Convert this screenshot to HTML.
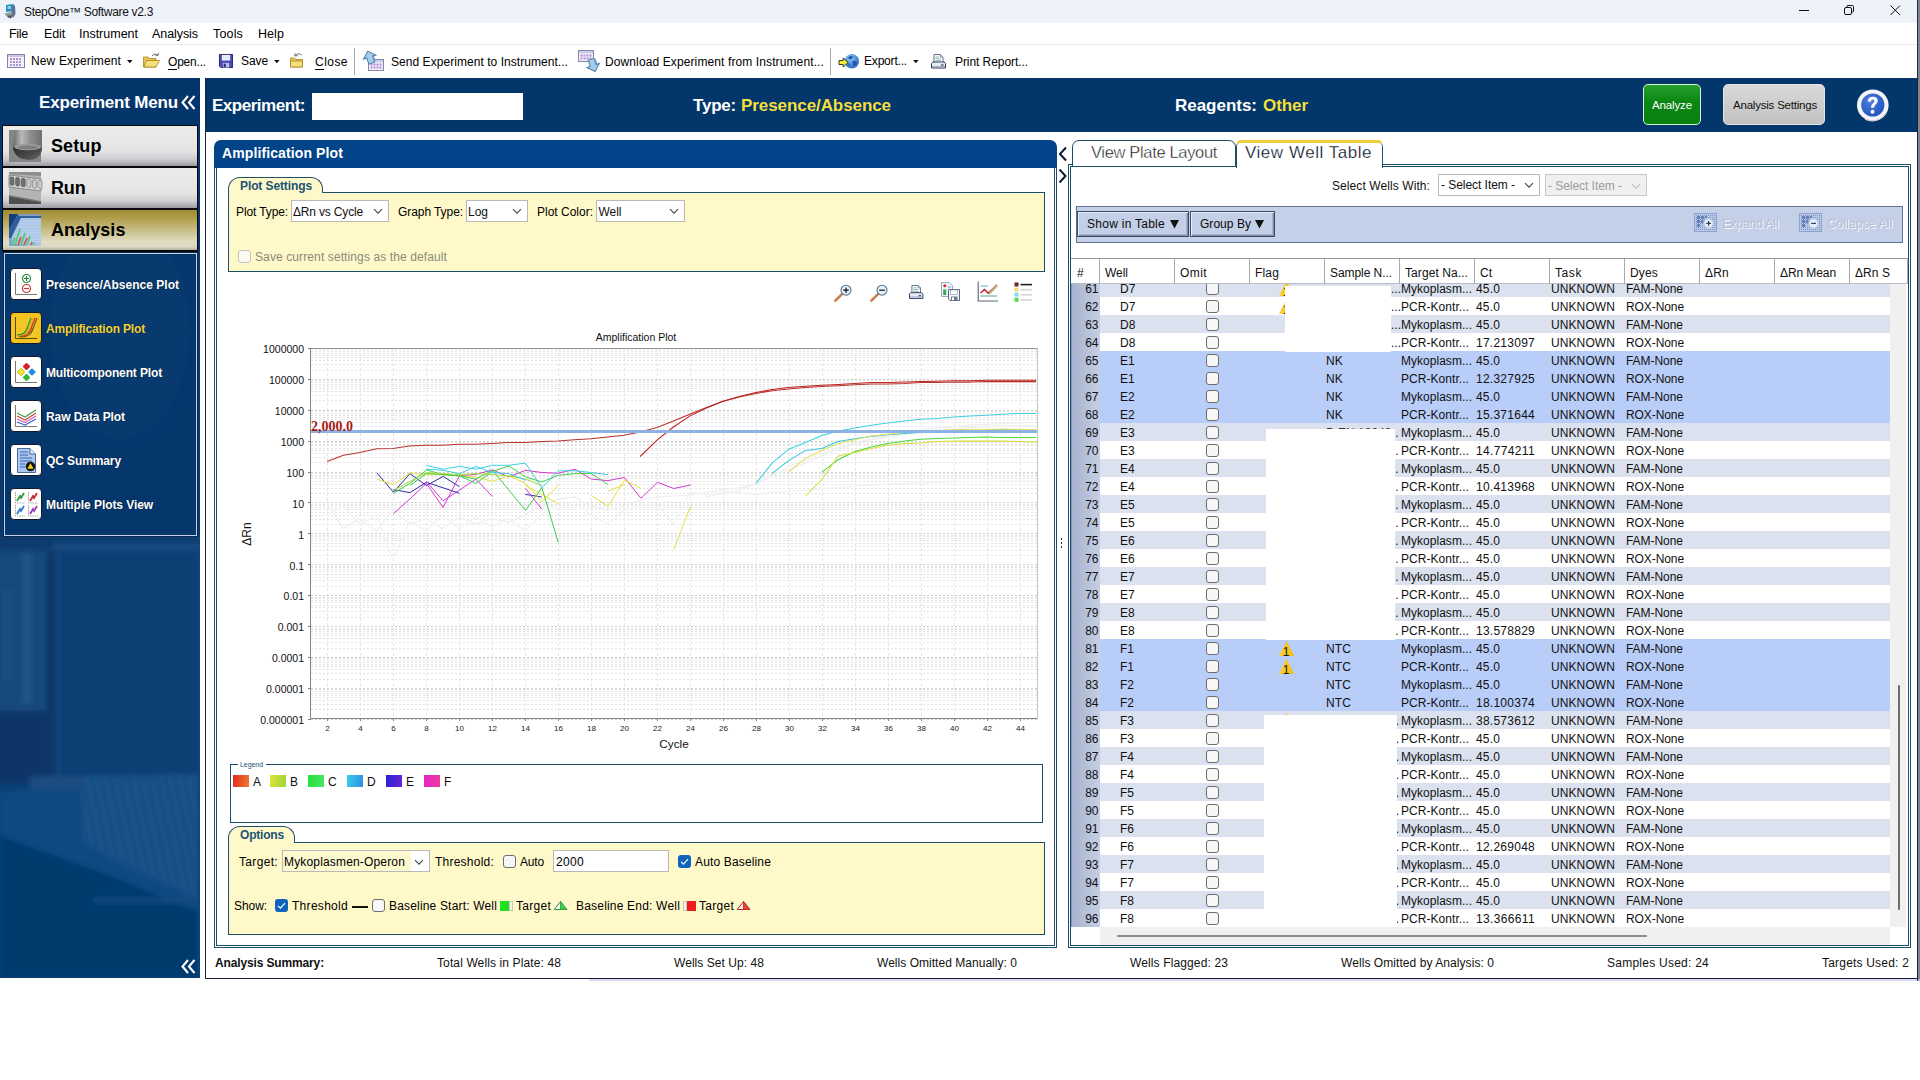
<!DOCTYPE html>
<html><head><meta charset="utf-8"><title>StepOne Software v2.3</title>
<style>
html,body{margin:0;padding:0;}
body{width:1920px;height:1080px;position:relative;overflow:hidden;background:#fff;font-family:"Liberation Sans",sans-serif;font-size:12px;color:#000;}
.t{position:absolute;white-space:nowrap;font-family:"Liberation Sans",sans-serif;}
.abs{position:absolute;}
svg{position:absolute;overflow:visible;}
.cb{position:absolute;width:11px;height:11px;border:1px solid #6d6d6d;border-radius:3px;background:#f7f7f7;}
.sel{position:absolute;background:#fff;border:1px solid #b4b4b4;box-sizing:border-box;}
</style></head><body>

<div style="position:absolute;left:0px;top:0px;width:1920px;height:23px;background:#eef2f9;"></div>
<svg style="left:3px;top:3px" width="15" height="17" viewBox="0 0 15 17">
<defs><filter id="ib"><feGaussianBlur stdDeviation="0.5"/></filter></defs>
<g filter="url(#ib)"><path d="M3 2 L10 1 L12 3 L12 8 L3 9 Z" fill="#2b8fc0"/><rect x="4.5" y="3" width="3.5" height="3" fill="#7fd4ee"/>
<path d="M9 3 L12 3 L12.5 11 L10 15 L8.5 12 Z" fill="#5b6f8c"/>
<path d="M1.5 10.5 L9 9 L10 12 L4 13.5 Z" fill="#8d949b"/><path d="M4 13 L9.5 12 L8 15.5 L5 14.5 Z" fill="#4d5560"/></g></svg>
<div class="t " style="left:24px;top:3.5px;font-size:12px;line-height:16px;font-weight:normal;color:#111;letter-spacing:-0.322px;">StepOne™ Software v2.3</div>
<svg style="left:1790px;top:0" width="120" height="22" viewBox="0 0 120 22" fill="none" stroke="#111" stroke-width="1">
<path d="M9 10.5 H19"/>
<rect x="54.5" y="7.5" width="7" height="7" rx="1.5"/><path d="M57 7 V6.5 Q57 5.5 58 5.5 H62.5 Q63.5 5.5 63.5 6.5 V11 Q63.5 12 62.5 12 H62"/>
<path d="M100.5 5.5 L110 15 M110 5.5 L100.5 15"/>
</svg>
<div style="position:absolute;left:0px;top:23px;width:1920px;height:22px;background:#fff;"></div>
<div class="t " style="left:9px;top:26.0px;font-size:12.5px;line-height:16px;font-weight:normal;color:#000;letter-spacing:-0.289px;">File</div>
<div class="t " style="left:44px;top:26.0px;font-size:12.5px;line-height:16px;font-weight:normal;color:#000;letter-spacing:-0.137px;">Edit</div>
<div class="t " style="left:79px;top:26.0px;font-size:12.5px;line-height:16px;font-weight:normal;color:#000;letter-spacing:-0.006px;">Instrument</div>
<div class="t " style="left:152px;top:26.0px;font-size:12.5px;line-height:16px;font-weight:normal;color:#000;letter-spacing:-0.068px;">Analysis</div>
<div class="t " style="left:213px;top:26.0px;font-size:12.5px;line-height:16px;font-weight:normal;color:#000;letter-spacing:0.163px;">Tools</div>
<div class="t " style="left:258px;top:26.0px;font-size:12.5px;line-height:16px;font-weight:normal;color:#000;letter-spacing:0.070px;">Help</div>
<div style="position:absolute;left:0px;top:44px;width:1917px;height:1px;background:#ebebeb;"></div>
<div style="position:absolute;left:0px;top:45px;width:1920px;height:33px;background:#fff;"></div>
<svg style="left:7px;top:54px" width="18" height="14" viewBox="0 0 18 14">
<rect x="0.5" y="0.5" width="17" height="13" fill="#f4f2fb" stroke="#7d83a8"/>
<g fill="#b48fd6"><rect x="3" y="4" width="2" height="2"/><rect x="6" y="4" width="2" height="2"/><rect x="9" y="4" width="2" height="2"/><rect x="12" y="4" width="2" height="2"/>
<rect x="3" y="7" width="2" height="2"/><rect x="6" y="7" width="2" height="2"/><rect x="9" y="7" width="2" height="2"/><rect x="12" y="7" width="2" height="2"/>
<rect x="3" y="10" width="2" height="2"/><rect x="6" y="10" width="2" height="2"/><rect x="9" y="10" width="2" height="2"/><rect x="12" y="10" width="2" height="2"/></g>
<rect x="1" y="1" width="16" height="2" fill="#c8cbe0"/>
</svg>
<div class="t " style="left:31px;top:53.0px;font-size:12px;line-height:16px;font-weight:normal;color:#000;letter-spacing:0.141px;">New Experiment</div>
<svg style="left:127px;top:60px" width="6" height="4"><path d="M0 0 H5.6 L2.8 3.2 Z" fill="#111"/></svg>
<svg style="left:143px;top:53px" width="18" height="15" viewBox="0 0 18 15">
<path d="M0.5 4 H5 L6.5 5.5 H13 V14 H0.5 Z" fill="#e8c252" stroke="#a88520" stroke-width="0.8"/>
<path d="M0.8 14 L3.5 7.5 H16.5 L13 14 Z" fill="#f6de7d" stroke="#a88520" stroke-width="0.8"/>
<path d="M9 3 Q12 -0.5 15 2.5 M15 2.5 l0.5 -2.6 M15 2.5 l-2.6 0.2" fill="none" stroke="#6a6a6a" stroke-width="1"/>
</svg>
<div class="t " style="left:168px;top:54.0px;font-size:12px;line-height:16px;font-weight:normal;color:#000;letter-spacing:-0.194px;text-decoration:none;">Open...</div>
<div style="position:absolute;left:168px;top:69px;width:9px;height:1px;background:#000;"></div>
<svg style="left:219px;top:54px" width="14" height="14" viewBox="0 0 15 15">
<path d="M0.5 0.5 H14.5 V14.5 H2 L0.5 13 Z" fill="#4747b8" stroke="#23236e" stroke-width="1"/>
<rect x="3" y="1" width="9" height="6" fill="#e9ecfb"/>
<rect x="4" y="9.5" width="7" height="5" fill="#b9bde0"/><rect x="5" y="10.5" width="2.3" height="3.5" fill="#2a2a80"/>
</svg>
<div class="t " style="left:241px;top:53.0px;font-size:12px;line-height:16px;font-weight:normal;color:#000;letter-spacing:-0.090px;">Save</div>
<svg style="left:274px;top:60px" width="6" height="4"><path d="M0 0 H5.6 L2.8 3.2 Z" fill="#111"/></svg>
<svg style="left:289px;top:52px" width="18" height="16" viewBox="0 0 18 16">
<path d="M1.5 6 H5.5 L7 7.5 H13.5 V15 H1.5 Z" fill="#e8c252" stroke="#a88520" stroke-width="0.8"/>
<path d="M1.5 9 H13.5 V15 H1.5 Z" fill="#f6de7d" stroke="#a88520" stroke-width="0.8"/>
<path d="M6 4 Q9 0 12.5 3 M6 4 l0 -2.8 M6 4 l2.6 -0.4" fill="none" stroke="#6a6a6a" stroke-width="1"/>
</svg>
<div class="t " style="left:315px;top:54.0px;font-size:12px;line-height:16px;font-weight:normal;color:#000;letter-spacing:0.463px;">Close</div>
<div style="position:absolute;left:315px;top:69px;width:9px;height:1px;background:#000;"></div>
<div style="position:absolute;left:354px;top:48px;width:1px;height:27px;background:#a9a9a9;"></div>
<svg style="left:362px;top:50px" width="24" height="24" viewBox="0 0 24 24"><g transform="translate(6,9)"><rect x="0.5" y="0.5" width="15" height="11" fill="#f1eefa" stroke="#8186aa"/>
<rect x="1" y="1" width="14" height="2.2" fill="#c9cce2"/>
<g fill="#b48fd6"><rect x="2.5" y="4.5" width="2" height="2"/><rect x="5.5" y="4.5" width="2" height="2"/><rect x="8.5" y="4.5" width="2" height="2"/><rect x="11.5" y="4.5" width="2" height="2"/>
<rect x="2.5" y="7.5" width="2" height="2"/><rect x="5.5" y="7.5" width="2" height="2"/><rect x="8.5" y="7.5" width="2" height="2"/><rect x="11.5" y="7.5" width="2" height="2"/></g></g><g transform="rotate(-18 8 8)"><path d="M8 0.8 L14.5 7 H11 V13.5 H5 V7 H1.5 Z" fill="#a6cdea" stroke="#4b7fa8" stroke-width="1"/><path d="M11 7 V13.5 L12.5 12 V7Z" fill="#6e9cc2"/></g></svg>
<div class="t " style="left:391px;top:54.0px;font-size:12px;line-height:16px;font-weight:normal;color:#000;letter-spacing:0.049px;">Send Experiment to Instrument...</div>
<svg style="left:578px;top:50px" width="24" height="24" viewBox="0 0 24 24"><g transform="translate(0,0)"><rect x="0.5" y="0.5" width="15" height="11" fill="#f1eefa" stroke="#8186aa"/>
<rect x="1" y="1" width="14" height="2.2" fill="#c9cce2"/>
<g fill="#b48fd6"><rect x="2.5" y="4.5" width="2" height="2"/><rect x="5.5" y="4.5" width="2" height="2"/><rect x="8.5" y="4.5" width="2" height="2"/><rect x="11.5" y="4.5" width="2" height="2"/>
<rect x="2.5" y="7.5" width="2" height="2"/><rect x="5.5" y="7.5" width="2" height="2"/><rect x="8.5" y="7.5" width="2" height="2"/><rect x="11.5" y="7.5" width="2" height="2"/></g></g><g transform="translate(7,7) rotate(-18 8 8)"><path d="M8 14.8 L14.5 8.5 H11 V2 H5 V8.5 H1.5 Z" fill="#a6cdea" stroke="#4b7fa8" stroke-width="1"/><path d="M11 2 V8.5 L12.5 8.5 V3.5Z" fill="#6e9cc2"/></g></svg>
<div class="t " style="left:605px;top:54.0px;font-size:12px;line-height:16px;font-weight:normal;color:#000;letter-spacing:0.111px;">Download Experiment from Instrument...</div>
<div style="position:absolute;left:830px;top:48px;width:1px;height:27px;background:#a9a9a9;"></div>
<svg style="left:838px;top:53px" width="22" height="17" viewBox="0 0 22 17">
<defs><radialGradient id="gg" cx="0.4" cy="0.3" r="0.8"><stop offset="0" stop-color="#9fd0f8"/><stop offset="0.5" stop-color="#4a90e0"/><stop offset="1" stop-color="#2a62b8"/></radialGradient></defs>
<circle cx="13.8" cy="8.3" r="7.2" fill="url(#gg)"/>
<path d="M10 4.5 Q12.5 2 15 3.4 Q14.5 5.8 12.5 6.5 Q10.6 6.6 10 4.5 Z M14 8 Q17.5 7 19.5 9.5 Q18 13 15 12.5 Q15.5 10 14 8 Z M9.5 10 Q11.5 10.5 12 13 Q10.5 13.5 9.5 10Z" fill="#1f57a8"/>
<path d="M1 7.5 H5.2 V5 L10.2 9.5 L5.2 14 V11.5 H1 Z" fill="#eef03a" stroke="#222" stroke-width="0.9" stroke-linejoin="round"/>
</svg>
<div class="t " style="left:864px;top:53.0px;font-size:12px;line-height:16px;font-weight:normal;color:#000;letter-spacing:-0.188px;">Export...</div>
<svg style="left:912.5px;top:60px" width="6" height="4"><path d="M0 0 H5.6 L2.8 3.2 Z" fill="#111"/></svg>
<svg style="left:930.5px;top:53.5px" width="15.0" height="15.0" viewBox="0 0 15 15">
<path d="M3 0.5 H9.5 L12 3 V8.5 H3 Z" fill="#fbfdfd" stroke="#55657f" stroke-width="0.9"/>
<path d="M9.5 0.5 V3 H12" fill="#dfe6ee" stroke="#55657f" stroke-width="0.7"/>
<path d="M4.5 3 H8 M4.5 4.8 H10 M4.5 6.6 H10" stroke="#7fb2b4" stroke-width="0.9"/>
<path d="M1.8 8 H13.2 L14.5 9.5 V14 H0.5 V9.5 Z" fill="#e9edf5" stroke="#2c3b5c" stroke-width="1"/>
<path d="M1 12.4 H14" stroke="#8d9ab4" stroke-width="0.8"/>
<rect x="10" y="10.3" width="2.6" height="1.5" fill="#56637e"/>
</svg>
<div class="t " style="left:955px;top:54.0px;font-size:12px;line-height:16px;font-weight:normal;color:#000;letter-spacing:-0.069px;">Print Report...</div>
<div style="position:absolute;left:1917px;top:0px;width:1px;height:981px;background:#262c3c;"></div>
<div style="position:absolute;left:1918px;top:0px;width:2px;height:979px;background:#7d8493;"></div>
<div style="position:absolute;left:1918px;top:979px;width:2px;height:2px;background:#b8b4d8;"></div>
<div style="position:absolute;left:205px;top:78px;width:1713px;height:901px;background:#fff;border:1px solid #1a2238;box-sizing:border-box;"></div>
<div style="position:absolute;left:206px;top:78px;width:1711px;height:54px;background:#03376b;"></div>
<div class="t " style="left:212px;top:95.0px;font-size:17px;line-height:22px;font-weight:bold;color:#fff;letter-spacing:-0.477px;">Experiment:</div>
<div style="position:absolute;left:312px;top:93px;width:211px;height:27px;background:#fff;"></div>
<div class="t " style="left:693px;top:95.0px;font-size:17px;line-height:22px;font-weight:bold;color:#fff;letter-spacing:-0.216px;">Type:</div>
<div class="t " style="left:741px;top:95.0px;font-size:17px;line-height:22px;font-weight:bold;color:#f4de3c;letter-spacing:-0.075px;">Presence/Absence</div>
<div class="t " style="left:1175px;top:95.0px;font-size:17px;line-height:22px;font-weight:bold;color:#fff;letter-spacing:-0.021px;">Reagents:</div>
<div class="t " style="left:1263px;top:95.0px;font-size:17px;line-height:22px;font-weight:bold;color:#f4de3c;letter-spacing:-0.069px;">Other</div>
<div class="abs" style="left:1643px;top:84px;width:58px;height:41px;box-sizing:border-box;border:1.5px solid #d9f3d5;border-radius:5px;background:linear-gradient(#25a02b 0%,#0b8512 45%,#0a7f10 100%);"></div>
<div class="t " style="left:1652px;top:97.5px;font-size:11.5px;line-height:15px;font-weight:normal;color:#fff;letter-spacing:-0.132px;">Analyze</div>
<div class="abs" style="left:1723px;top:84px;width:102px;height:41px;box-sizing:border-box;border:1.5px solid #e4e4e4;border-radius:5px;background:linear-gradient(#d9d9d9 0%,#cbcbcb 60%,#c2c2c2 100%);"></div>
<div class="t " style="left:1733px;top:97.5px;font-size:11.5px;line-height:15px;font-weight:normal;color:#111;letter-spacing:-0.210px;">Analysis Settings</div>
<svg style="left:1855px;top:87px" width="36" height="36" viewBox="0 0 36 36">
<defs><radialGradient id="hg" cx="0.4" cy="0.35" r="0.8"><stop offset="0" stop-color="#4f80de"/><stop offset="0.6" stop-color="#2f60c8"/><stop offset="1" stop-color="#2450b0"/></radialGradient></defs>
<circle cx="17.8" cy="18.2" r="15.8" fill="#f3f5fb"/>
<path d="M31 26 A15.8 15.8 0 0 1 10 32" fill="none" stroke="#c9ccd4" stroke-width="1.2"/>
<circle cx="17.8" cy="18" r="11.6" fill="url(#hg)"/>
<g transform="translate(17.8 18) scale(0.94) translate(-18 -17.4)">
<path d="M12.6 13.6 Q12.8 8.6 18 8.6 Q23.2 8.6 23.2 13 Q23.2 15.6 20.6 17.4 Q19.3 18.4 19.3 20.4 L16 20.4 Q16 17.6 17.8 16 Q19.8 14.4 19.8 13.2 Q19.8 11.6 18 11.6 Q16.2 11.6 16 13.9 Z" fill="#fff"/>
<circle cx="17.7" cy="24.6" r="2.1" fill="#fff"/></g>
</svg>
<div class="t " style="left:215px;top:955.0px;font-size:12px;line-height:16px;font-weight:bold;color:#111;letter-spacing:-0.141px;">Analysis Summary:</div>
<div class="t " style="left:437px;top:955.0px;font-size:12px;line-height:16px;font-weight:normal;color:#111;letter-spacing:0.118px;">Total Wells in Plate: 48</div>
<div class="t " style="left:674px;top:955.0px;font-size:12px;line-height:16px;font-weight:normal;color:#111;letter-spacing:0.053px;">Wells Set Up: 48</div>
<div class="t " style="left:877px;top:955.0px;font-size:12px;line-height:16px;font-weight:normal;color:#111;letter-spacing:0.033px;">Wells Omitted Manually: 0</div>
<div class="t " style="left:1130px;top:955.0px;font-size:12px;line-height:16px;font-weight:normal;color:#111;letter-spacing:0.127px;">Wells Flagged: 23</div>
<div class="t " style="left:1341px;top:955.0px;font-size:12px;line-height:16px;font-weight:normal;color:#111;letter-spacing:0.065px;">Wells Omitted by Analysis: 0</div>
<div class="t " style="left:1607px;top:955.0px;font-size:12px;line-height:16px;font-weight:normal;color:#111;letter-spacing:0.246px;">Samples Used: 24</div>
<div class="t " style="left:1822px;top:955.0px;font-size:12px;line-height:16px;font-weight:normal;color:#111;letter-spacing:0.197px;">Targets Used: 2</div>
<div style="position:absolute;left:589px;top:979px;width:1328px;height:2px;background:#dcd8f6;"></div>
<div class="abs" style="left:0;top:78px;width:200px;height:900px;overflow:hidden;background:#05366b;">
<svg style="left:0;top:0" width="200" height="900" viewBox="0 78 200 900">
<defs><filter id="bl" x="-20%" y="-20%" width="140%" height="140%"><feGaussianBlur stdDeviation="2.5"/></filter>
<filter id="bl2" x="-20%" y="-20%" width="140%" height="140%"><feGaussianBlur stdDeviation="6"/></filter>
<pattern id="plt" width="9" height="7" patternUnits="userSpaceOnUse" patternTransform="rotate(-12)"><rect width="9" height="7" fill="#184d84"/><ellipse cx="4.5" cy="3.5" rx="3.2" ry="2" fill="#1f568e"/></pattern></defs>
<rect x="0" y="78" width="200" height="900" fill="#05366b"/>
<rect x="0" y="250" width="200" height="300" fill="#08396f"/>
<g filter="url(#bl2)"><ellipse cx="120" cy="330" rx="70" ry="110" fill="#0d4179" opacity="0.7"/></g>
<rect x="0" y="536" width="200" height="442" fill="#0d3f74"/>
<g filter="url(#bl)">
<rect x="-5" y="536" width="210" height="12" fill="#0a3a6e"/>
<rect x="52" y="543" width="150" height="8" fill="#124a80"/>
<rect x="-5" y="551" width="52" height="160" fill="#18487c"/>
<rect x="22" y="553" width="10" height="150" fill="#215389"/>
<rect x="2" y="590" width="12" height="90" fill="#1c4d82"/>
<rect x="-5" y="711" width="52" height="72" fill="#073568"/>
<rect x="46" y="551" width="10" height="232" fill="#0a3769"/>
<rect x="56" y="553" width="2.5" height="225" fill="#1b4d83"/>
<polygon points="0,792 80,785 200,880 200,912 100,872 0,836" fill="#0f4a82"/>
<polygon points="82,776 200,774 200,900 118,862 82,842" fill="url(#plt)"/>
<polygon points="0,836 100,872 200,912 200,978 0,978" fill="#063a6e"/>
<rect x="30" y="776" width="52" height="14" fill="#1a4c82"/>
<rect x="95" y="898" width="105" height="5" fill="#14497f"/>
</g>
<rect x="197" y="536" width="3" height="442" fill="#0d477e" opacity="0.6"/>
</svg></div>
<div class="t " style="left:39px;top:92.0px;font-size:17px;line-height:22px;font-weight:bold;color:#fff;letter-spacing:-0.180px;">Experiment Menu</div>
<svg style="left:181px;top:95px" width="15" height="15" viewBox="0 0 15 15" fill="none" stroke="#fff" stroke-width="2.1"><path d="M7 1 L1.5 7.5 L7 14 M13.5 1 L8 7.5 L13.5 14"/></svg>
<svg style="left:181px;top:959px" width="15" height="15" viewBox="0 0 15 15" fill="none" stroke="#fff" stroke-width="2.1"><path d="M7 1 L1.5 7.5 L7 14 M13.5 1 L8 7.5 L13.5 14"/></svg>
<div class="abs" style="left:2px;top:125px;width:196px;height:43px;box-sizing:border-box;border:1px solid #0a0a0a;border-bottom-width:2px;background:linear-gradient(180deg,#ececec 0%,#e7e7e7 40%,#e4e4e4 62%,#cfcfd3 82%,#a7a7ae 96%,#9a9aa2 100%);"></div>
<div class="t " style="left:51px;top:134.7px;font-size:18px;line-height:23px;font-weight:bold;color:#000;letter-spacing:0.097px;">Setup</div>
<div class="abs" style="left:2px;top:167px;width:196px;height:43px;box-sizing:border-box;border:1px solid #0a0a0a;border-bottom-width:2px;background:linear-gradient(180deg,#ececec 0%,#e7e7e7 40%,#e4e4e4 62%,#cfcfd3 82%,#a7a7ae 96%,#9a9aa2 100%);"></div>
<div class="t " style="left:51px;top:176.7px;font-size:18px;line-height:23px;font-weight:bold;color:#000;letter-spacing:-0.167px;">Run</div>
<div class="abs" style="left:2px;top:209px;width:196px;height:43px;box-sizing:border-box;border:1px solid #0a0a0a;border-bottom-width:2px;background:linear-gradient(180deg,#9f8c34 0%,#ad9b47 18%,#c8bd84 50%,#e0dbc0 78%,#dcd8c6 92%,#b4b09e 100%);"></div>
<div class="t " style="left:51px;top:218.7px;font-size:18px;line-height:23px;font-weight:bold;color:#000;letter-spacing:0.057px;">Analysis</div>
<svg style="left:9px;top:130px" width="32" height="32" viewBox="0 0 32 32">
<defs><linearGradient id="tb" x1="0" x2="1"><stop offset="0" stop-color="#6a6a6a"/><stop offset="0.3" stop-color="#b9b9b9"/><stop offset="0.6" stop-color="#8f8f8f"/><stop offset="1" stop-color="#6f6f6f"/></linearGradient>
<linearGradient id="tb2" x1="0" x2="1" y1="0" y2="1"><stop offset="0" stop-color="#2c2c2c"/><stop offset="0.6" stop-color="#4a4a4a"/><stop offset="1" stop-color="#6a6a6a"/></linearGradient></defs>
<rect width="32" height="32" fill="#858585"/>
<path d="M6 0 H33 V18 Q32 30 19 30 Q5 29 4 17 Z" fill="url(#tb)"/>
<path d="M4 17 Q18 23 33 18 Q32 30 19 30 Q5 29 4 17 Z" fill="url(#tb2)"/>
<ellipse cx="18.5" cy="17" rx="13" ry="3.2" fill="#9c9c9c"/>
<ellipse cx="19" cy="17.4" rx="10" ry="2" fill="#7e7e7e"/>
</svg>
<svg style="left:9px;top:172px" width="32" height="32" viewBox="0 0 32 32">
<rect width="32" height="32" fill="#b4b4b4"/>
<path d="M0 0 H32 V4 L0 2 Z" fill="#8e8e8e"/>
<path d="M0 3 L32 7 V19 L0 15 Z" fill="#d6d6d6" stroke="#6e6e6e" stroke-width="0.7"/>
<g stroke="#555" stroke-width="0.6" transform="skewY(7)"><g fill="#6f6f6f"><rect x="1" y="4.5" width="4" height="8.5" rx="1.6"/><rect x="6.6" y="4.5" width="4" height="8.5" rx="1.6"/><rect x="12.2" y="4.5" width="4" height="8.5" rx="1.6"/></g>
<g fill="#c9c9c9" stroke="#777"><rect x="17.8" y="4.5" width="4" height="8.5" rx="1.6"/><rect x="23.4" y="4.5" width="4" height="8.5" rx="1.6"/><rect x="29" y="4.5" width="4" height="8.5" rx="1.6"/></g></g>
<path d="M0 24 L32 30 V32 H0 Z" fill="#4e4e4e"/><path d="M0 23 L32 29 V30.5 L0 24.5Z" fill="#777"/>
</svg>
<svg style="left:9px;top:214px" width="32" height="32" viewBox="0 0 32 32">
<rect width="32" height="32" fill="#7fa6cf"/>
<path d="M0 0 H9 L0 16 Z" fill="#163f78"/><path d="M9 0 H32 V4 L12 4 L2 24 L0 24 V16 Z" fill="#2f5e98"/>
<path d="M9 0 H32 V2 H10 Z" fill="#8a9db8"/>
<path d="M12 4 H32 V32 H20 L3 30 L3 23 Z" fill="#a9c6e6"/>
<g stroke="#c6d9ef" stroke-width="0.8"><path d="M11 7 H32 M10 10 H32 M9 13 H32 M8 16 H32 M7 19 H32 M6 22 H32 M5 25 H32 M4 28 H32"/></g>
<g stroke-width="1.8"><path d="M3 31 L6 24" stroke="#59c47a"/><path d="M6 31 L11 15" stroke="#59c47a"/><path d="M9 31 L12 23" stroke="#c85a4a"/><path d="M12 31 L16 19" stroke="#59c47a"/><path d="M15 31 L18 24" stroke="#c85a4a"/><path d="M18 31 L21 22" stroke="#59c47a"/><path d="M22 31 L23 28" stroke="#c85a4a"/><path d="M24.5 31 L25.5 28.5" stroke="#59c47a"/></g>
</svg>
<div class="abs" style="left:3px;top:252px;width:195px;height:285px;box-sizing:border-box;border:1px solid #0b2a52;"></div>
<div class="abs" style="left:4px;top:253px;width:193px;height:283px;box-sizing:border-box;border:1px solid #c3d2ea;background:rgba(4,52,106,0.55);"></div>
<div class="abs" style="left:10px;top:268px;width:32px;height:32px;box-sizing:border-box;border:1px solid #111a2a;border-radius:4px;background:#fff;"></div>
<div class="t " style="left:46px;top:277.0px;font-size:12px;line-height:16px;font-weight:bold;color:#fff;letter-spacing:0.013px;text-shadow:0 0 1px rgba(0,0,0,0.6);">Presence/Absence Plot</div>
<div class="abs" style="left:10px;top:312px;width:32px;height:32px;box-sizing:border-box;border:1px solid #111a2a;border-radius:4px;background:#f2c321;"></div>
<div class="t " style="left:46px;top:321.0px;font-size:12px;line-height:16px;font-weight:bold;color:#f2d338;letter-spacing:-0.167px;text-shadow:0 0 1px rgba(0,0,0,0.6);">Amplification Plot</div>
<div class="abs" style="left:10px;top:356px;width:32px;height:32px;box-sizing:border-box;border:1px solid #111a2a;border-radius:4px;background:#fff;"></div>
<div class="t " style="left:46px;top:365.0px;font-size:12px;line-height:16px;font-weight:bold;color:#fff;letter-spacing:-0.140px;text-shadow:0 0 1px rgba(0,0,0,0.6);">Multicomponent Plot</div>
<div class="abs" style="left:10px;top:400px;width:32px;height:32px;box-sizing:border-box;border:1px solid #111a2a;border-radius:4px;background:#fff;"></div>
<div class="t " style="left:46px;top:409.0px;font-size:12px;line-height:16px;font-weight:bold;color:#fff;letter-spacing:-0.078px;text-shadow:0 0 1px rgba(0,0,0,0.6);">Raw Data Plot</div>
<div class="abs" style="left:10px;top:444px;width:32px;height:32px;box-sizing:border-box;border:1px solid #111a2a;border-radius:4px;background:#fff;"></div>
<div class="t " style="left:46px;top:453.0px;font-size:12px;line-height:16px;font-weight:bold;color:#fff;letter-spacing:-0.103px;text-shadow:0 0 1px rgba(0,0,0,0.6);">QC Summary</div>
<div class="abs" style="left:10px;top:488px;width:32px;height:32px;box-sizing:border-box;border:1px solid #111a2a;border-radius:4px;background:#fff;"></div>
<div class="t " style="left:46px;top:497.0px;font-size:12px;line-height:16px;font-weight:bold;color:#fff;letter-spacing:-0.077px;text-shadow:0 0 1px rgba(0,0,0,0.6);">Multiple Plots View</div>
<svg style="left:11px;top:269px" width="30" height="30" viewBox="0 0 30 30" fill="none">
<path d="M4.5 4 V25.5 H26" stroke="#777" stroke-width="1"/>
<circle cx="15.5" cy="9.5" r="4" stroke="#1f8a3c" stroke-width="1.2"/><path d="M13 9.5 H18 M15.5 7 V12" stroke="#1f8a3c" stroke-width="1.2"/>
<circle cx="15.5" cy="19.5" r="4" stroke="#c8323a" stroke-width="1.2"/><path d="M13 19.5 H18" stroke="#c8323a" stroke-width="1.2"/>
</svg>
<svg style="left:11px;top:313px" width="30" height="30" viewBox="0 0 30 30" fill="none">
<path d="M4.5 4 V25.5 H26" stroke="#5a4a10" stroke-width="1"/>
<g stroke="#f8e27a" stroke-width="0.6" stroke-dasharray="1 1.5"><path d="M6 8 H26 M6 11 H26 M6 14 H26 M6 17 H26 M6 20 H26 M6 23 H26"/></g>
<path d="M6 22 C12 22 15 20 17 13 L20 5" stroke="#2e9a3a" stroke-width="1.3"/>
<path d="M7 23 C14 23 17 20 19 13 L22 5" stroke="#e8b000" stroke-width="1.3"/>
<path d="M8 23.5 C16 23.5 19 20 21 13 L24 5" stroke="#d13a2a" stroke-width="1.3"/>
<path d="M10 24 C18 24 21 20 23 13 L26 5" stroke="#6a5a20" stroke-width="1.2"/>
</svg>
<svg style="left:11px;top:357px" width="30" height="30" viewBox="0 0 30 30" fill="none">
<path d="M4.5 4 V25.5 H26" stroke="#777" stroke-width="1"/>
<rect x="12.7" y="6.7" width="5.6" height="5.6" rx="1" transform="rotate(45 15.5 9.5)" fill="#d62027"/>
<rect x="7.2" y="12.2" width="5.6" height="5.6" rx="1" transform="rotate(45 10 15)" fill="#f2e23a" stroke="#b8a800" stroke-width="0.6"/>
<rect x="18.2" y="12.2" width="5.6" height="5.6" rx="1" transform="rotate(45 21 15)" fill="#2a8ee0"/>
<rect x="12.7" y="17.7" width="5.6" height="5.6" rx="1" transform="rotate(45 15.5 20.5)" fill="#2fba3a"/>
</svg>
<svg style="left:11px;top:401px" width="30" height="30" viewBox="0 0 30 30" fill="none">
<path d="M4.5 4 V25.5 H26" stroke="#777" stroke-width="1"/>
<path d="M6 12 L14 16 L25 9" stroke="#3ca04a" stroke-width="1.2"/>
<path d="M6 15 L14 19 L25 12" stroke="#d1423a" stroke-width="1.2"/>
<path d="M6 18 L14 21.5 L25 15" stroke="#c06ac0" stroke-width="1.2"/>
<path d="M6 21 L14 24 L25 18" stroke="#3a66c8" stroke-width="1.2"/>
</svg>
<svg style="left:11px;top:445px" width="30" height="30" viewBox="0 0 30 30" fill="none">
<path d="M6.5 3.5 H19 L24.5 9 V27.5 H6.5 Z" fill="#a9c9f2" stroke="#4a6a9a" stroke-width="1"/>
<path d="M19 3.5 V9 H24.5" fill="#e6f0fc" stroke="#4a6a9a" stroke-width="1"/>
<path d="M9 7 H17 M9 10 H17 M9 13 H21 M9 16 H21 M9 19 H14 M9 22 H14" stroke="#3f66a8" stroke-width="1.2"/>
<circle cx="19.5" cy="21.5" r="4.8" fill="#151515"/>
<path d="M19.5 18.2 L22.6 23.8 H16.4 Z" fill="#f2d21f"/>
</svg>
<svg style="left:11px;top:489px" width="30" height="30" viewBox="0 0 30 30" fill="none">
<g stroke="#888" stroke-width="0.8" stroke-dasharray="1.5 1"><path d="M4.5 3 V14 H14 M17.5 3 V14 H27 M4.5 16 V27 H14 M17.5 16 V27 H27"/></g>
<path d="M6 12 L9 7 L10 9 L13 4" stroke="#2f9a3e" stroke-width="1.8"/>
<path d="M19 12 L22 7 L23 9 L26 4" stroke="#c8282e" stroke-width="1.8"/>
<path d="M6 25 L9 20 L10 22 L13 17" stroke="#2a7ad0" stroke-width="1.8"/>
<path d="M19 25 L22 20 L23 22 L26 17" stroke="#9a3ab8" stroke-width="1.8"/>
</svg>
<div class="abs" style="left:214px;top:140px;width:843px;height:28px;background:#01448a;border-radius:7px 7px 0 0;"></div>
<div class="t " style="left:222px;top:144.0px;font-size:14px;line-height:18px;font-weight:bold;color:#fff;letter-spacing:0.111px;">Amplification Plot</div>
<div class="abs" style="left:214px;top:167px;width:843px;height:781px;box-sizing:border-box;border:1px solid #1d4f6b;border-top:none;"></div>
<div class="abs" style="left:216px;top:167px;width:839px;height:779px;box-sizing:border-box;border:1px solid #1d4f6b;border-top:none;"></div>
<div class="abs" style="left:228px;top:177px;width:95px;height:17px;box-sizing:border-box;border:1px solid #1d4f6b;border-bottom:none;border-radius:12px 12px 0 0;background:#fff9c9;"></div>
<div class="abs" style="left:228px;top:192px;width:817px;height:80px;box-sizing:border-box;border:1px solid #1d4f6b;background:#fff9c9;"></div>
<div class="abs" style="left:229px;top:192px;width:93px;height:2px;background:#fff9c9;"></div>
<div class="t " style="left:240px;top:177.5px;font-size:12px;line-height:16px;font-weight:bold;color:#1b5474;letter-spacing:-0.103px;">Plot Settings</div>
<div class="t " style="left:236px;top:203.5px;font-size:12px;line-height:16px;font-weight:normal;color:#000;letter-spacing:-0.116px;">Plot Type:</div>
<div class="abs" style="left:291px;top:200px;width:98px;height:22px;box-sizing:border-box;border:1px solid #b9b9b9;background:#fff;"></div>
<div class="t " style="left:293px;top:203.8px;font-size:12px;line-height:16px;font-weight:normal;color:#111;letter-spacing:-0.169px;">ΔRn vs Cycle</div>
<svg style="left:373px;top:208.0px" width="10" height="7" viewBox="0 0 10 7" fill="none" stroke="#444" stroke-width="1.1"><path d="M1 1.2 L5 5.2 L9 1.2"/></svg>
<div class="t " style="left:398px;top:203.5px;font-size:12px;line-height:16px;font-weight:normal;color:#000;letter-spacing:-0.075px;">Graph Type:</div>
<div class="abs" style="left:466px;top:200px;width:62px;height:22px;box-sizing:border-box;border:1px solid #b9b9b9;background:#fff;"></div>
<div class="t " style="left:468px;top:203.8px;font-size:12px;line-height:16px;font-weight:normal;color:#111;letter-spacing:-0.010px;">Log</div>
<svg style="left:512px;top:208.0px" width="10" height="7" viewBox="0 0 10 7" fill="none" stroke="#444" stroke-width="1.1"><path d="M1 1.2 L5 5.2 L9 1.2"/></svg>
<div class="t " style="left:537px;top:203.5px;font-size:12px;line-height:16px;font-weight:normal;color:#000;letter-spacing:-0.003px;">Plot Color:</div>
<div class="abs" style="left:596px;top:200px;width:89px;height:22px;box-sizing:border-box;border:1px solid #b9b9b9;background:#fff;"></div>
<div class="t " style="left:598.5px;top:203.8px;font-size:12px;line-height:16px;font-weight:normal;color:#111;letter-spacing:-0.031px;">Well</div>
<svg style="left:669px;top:208.0px" width="10" height="7" viewBox="0 0 10 7" fill="none" stroke="#444" stroke-width="1.1"><path d="M1 1.2 L5 5.2 L9 1.2"/></svg>
<div class="cb" style="left:238px;top:250px;border-color:#c4c4c0;background:#fbfaf0;"></div>
<div class="t " style="left:255px;top:249.0px;font-size:12px;line-height:16px;font-weight:normal;color:#8a8a7c;letter-spacing:0.108px;">Save current settings as the default</div>
<svg style="left:834px;top:283.5px" width="19" height="18" viewBox="0 0 19 18" fill="none">
<path d="M1.2 16.6 L8.4 9.6" stroke="#d08a5a" stroke-width="2.6" stroke-linecap="round"/>
<path d="M1.6 17 L8.6 10.2" stroke="#a8602a" stroke-width="0.8"/>
<circle cx="12" cy="6.2" r="5" fill="#e3f1fb" stroke="#55708c" stroke-width="1.1"/><path d="M9.2 6.2 H14.8 M12 3.4 V9" stroke="#111" stroke-width="1.2"/></svg>
<svg style="left:870px;top:283.5px" width="19" height="18" viewBox="0 0 19 18" fill="none">
<path d="M1.2 16.6 L8.4 9.6" stroke="#d08a5a" stroke-width="2.6" stroke-linecap="round"/>
<path d="M1.6 17 L8.6 10.2" stroke="#a8602a" stroke-width="0.8"/>
<circle cx="12" cy="6.2" r="5" fill="#e3f1fb" stroke="#55708c" stroke-width="1.1"/><path d="M9.2 6.2 H14.8" stroke="#111" stroke-width="1.2"/></svg>
<svg style="left:908.8px;top:284.8px" width="14.399999999999999" height="14.399999999999999" viewBox="0 0 15 15">
<path d="M3 0.5 H9.5 L12 3 V8.5 H3 Z" fill="#fbfdfd" stroke="#55657f" stroke-width="0.9"/>
<path d="M9.5 0.5 V3 H12" fill="#dfe6ee" stroke="#55657f" stroke-width="0.7"/>
<path d="M4.5 3 H8 M4.5 4.8 H10 M4.5 6.6 H10" stroke="#7fb2b4" stroke-width="0.9"/>
<path d="M1.8 8 H13.2 L14.5 9.5 V14 H0.5 V9.5 Z" fill="#e9edf5" stroke="#2c3b5c" stroke-width="1"/>
<path d="M1 12.4 H14" stroke="#8d9ab4" stroke-width="0.8"/>
<rect x="10" y="10.3" width="2.6" height="1.5" fill="#56637e"/>
</svg>
<svg style="left:941px;top:282px" width="21" height="20" viewBox="0 0 21 20" fill="none">
<path d="M0.5 0.5 H8.5 L11.5 3.5 V14.5 H0.5 Z" fill="#eef2f8" stroke="#8a96ae" stroke-width="0.8"/>
<circle cx="3.8" cy="3.8" r="1.5" fill="#d22a3a"/><rect x="2.2" y="7.5" width="3" height="5.5" fill="#36a85a"/><path d="M7 5 H10 M7 8 H10" stroke="#5a8ac0" stroke-width="0.8"/>
<path d="M7.5 7.5 H18.5 V18.5 H9 L7.5 17 Z" fill="#f4f6fa" stroke="#5a6a84" stroke-width="1"/>
<rect x="9.5" y="8" width="7" height="4.5" fill="#fff" stroke="#8a96ae" stroke-width="0.6"/><rect x="10" y="14.5" width="6.5" height="4" fill="#6a7a94"/><rect x="11" y="15.3" width="2" height="2.8" fill="#fff"/>
</svg>
<svg style="left:977px;top:281px" width="22" height="21" viewBox="0 0 22 21" fill="none">
<path d="M1.2 0.5 V20 H21" stroke="#5a6472" stroke-width="1.1"/>
<path d="M3.5 5 H11" stroke="#4aa0c8" stroke-width="0.9"/><path d="M3.5 15 H20" stroke="#3a9a7a" stroke-width="0.9"/>
<path d="M3.5 12 L7.5 8.5 L11 12 L16 8" stroke="#b81a2a" stroke-width="1.4"/>
<path d="M11 12.5 L19 3.5 L20.5 5 L12.5 13 Z" fill="#d6b07a" stroke="#8a6a3a" stroke-width="0.6"/>
</svg>
<svg style="left:1014px;top:282px" width="19" height="20" viewBox="0 0 19 20">
<rect x="0.5" y="0.5" width="4" height="4" fill="#6a2a2a"/><rect x="6.5" y="1.8" width="11.5" height="1.6" fill="#222"/>
<rect x="0.5" y="5.6" width="4" height="4" fill="#f0dc7a"/><rect x="6.5" y="6.9" width="11.5" height="1.6" fill="#d4d4d4"/>
<rect x="0.5" y="10.7" width="4" height="4" fill="#7adcec"/><rect x="6.5" y="12" width="11.5" height="1.6" fill="#d4d4d4"/>
<rect x="0.5" y="15.8" width="4" height="4" fill="#5ad84a"/><rect x="6.5" y="17.1" width="11.5" height="1.6" fill="#d4d4d4"/>
</svg>
<svg style="left:0;top:0" width="1920" height="1080" viewBox="0 0 1920 1080" fill="none">
<rect x="311.0" y="348.0" width="726" height="370.5" fill="#fff"/>
<path d="M327.5 348.0 V718" stroke="#e6e6e6" stroke-width="1" stroke-dasharray="3 2"/>
<path d="M360.5 348.0 V718" stroke="#e6e6e6" stroke-width="1" stroke-dasharray="3 2"/>
<path d="M393.5 348.0 V718" stroke="#e6e6e6" stroke-width="1" stroke-dasharray="3 2"/>
<path d="M426.5 348.0 V718" stroke="#e6e6e6" stroke-width="1" stroke-dasharray="3 2"/>
<path d="M459.5 348.0 V718" stroke="#e6e6e6" stroke-width="1" stroke-dasharray="3 2"/>
<path d="M492.5 348.0 V718" stroke="#e6e6e6" stroke-width="1" stroke-dasharray="3 2"/>
<path d="M525.5 348.0 V718" stroke="#e6e6e6" stroke-width="1" stroke-dasharray="3 2"/>
<path d="M558.5 348.0 V718" stroke="#e6e6e6" stroke-width="1" stroke-dasharray="3 2"/>
<path d="M591.5 348.0 V718" stroke="#e6e6e6" stroke-width="1" stroke-dasharray="3 2"/>
<path d="M624.5 348.0 V718" stroke="#e6e6e6" stroke-width="1" stroke-dasharray="3 2"/>
<path d="M657.5 348.0 V718" stroke="#e6e6e6" stroke-width="1" stroke-dasharray="3 2"/>
<path d="M690.5 348.0 V718" stroke="#e6e6e6" stroke-width="1" stroke-dasharray="3 2"/>
<path d="M723.5 348.0 V718" stroke="#e6e6e6" stroke-width="1" stroke-dasharray="3 2"/>
<path d="M756.5 348.0 V718" stroke="#e6e6e6" stroke-width="1" stroke-dasharray="3 2"/>
<path d="M789.5 348.0 V718" stroke="#e6e6e6" stroke-width="1" stroke-dasharray="3 2"/>
<path d="M822.5 348.0 V718" stroke="#e6e6e6" stroke-width="1" stroke-dasharray="3 2"/>
<path d="M855.5 348.0 V718" stroke="#e6e6e6" stroke-width="1" stroke-dasharray="3 2"/>
<path d="M888.5 348.0 V718" stroke="#e6e6e6" stroke-width="1" stroke-dasharray="3 2"/>
<path d="M921.5 348.0 V718" stroke="#e6e6e6" stroke-width="1" stroke-dasharray="3 2"/>
<path d="M954.5 348.0 V718" stroke="#e6e6e6" stroke-width="1" stroke-dasharray="3 2"/>
<path d="M987.5 348.0 V718" stroke="#e6e6e6" stroke-width="1" stroke-dasharray="3 2"/>
<path d="M1020.5 348.0 V718" stroke="#e6e6e6" stroke-width="1" stroke-dasharray="3 2"/>
<path d="M311.0 719.5 H1037" stroke="#d0d0d0" stroke-width="1" stroke-dasharray="2 2"/>
<path d="M311.0 709.5 H1037" stroke="#e3e3e3" stroke-width="1" stroke-dasharray="2 2"/>
<path d="M311.0 704.5 H1037" stroke="#e3e3e3" stroke-width="1" stroke-dasharray="2 2"/>
<path d="M311.0 700.5 H1037" stroke="#e3e3e3" stroke-width="1" stroke-dasharray="2 2"/>
<path d="M311.0 697.5 H1037" stroke="#e3e3e3" stroke-width="1" stroke-dasharray="2 2"/>
<path d="M311.0 695.5 H1037" stroke="#e3e3e3" stroke-width="1" stroke-dasharray="2 2"/>
<path d="M311.0 693.5 H1037" stroke="#e3e3e3" stroke-width="1" stroke-dasharray="2 2"/>
<path d="M311.0 691.5 H1037" stroke="#e3e3e3" stroke-width="1" stroke-dasharray="2 2"/>
<path d="M311.0 689.5 H1037" stroke="#e3e3e3" stroke-width="1" stroke-dasharray="2 2"/>
<path d="M311.0 688.5 H1037" stroke="#d0d0d0" stroke-width="1" stroke-dasharray="2 2"/>
<path d="M311.0 679.5 H1037" stroke="#e3e3e3" stroke-width="1" stroke-dasharray="2 2"/>
<path d="M311.0 673.5 H1037" stroke="#e3e3e3" stroke-width="1" stroke-dasharray="2 2"/>
<path d="M311.0 669.5 H1037" stroke="#e3e3e3" stroke-width="1" stroke-dasharray="2 2"/>
<path d="M311.0 666.5 H1037" stroke="#e3e3e3" stroke-width="1" stroke-dasharray="2 2"/>
<path d="M311.0 664.5 H1037" stroke="#e3e3e3" stroke-width="1" stroke-dasharray="2 2"/>
<path d="M311.0 662.5 H1037" stroke="#e3e3e3" stroke-width="1" stroke-dasharray="2 2"/>
<path d="M311.0 660.5 H1037" stroke="#e3e3e3" stroke-width="1" stroke-dasharray="2 2"/>
<path d="M311.0 658.5 H1037" stroke="#e3e3e3" stroke-width="1" stroke-dasharray="2 2"/>
<path d="M311.0 657.5 H1037" stroke="#d0d0d0" stroke-width="1" stroke-dasharray="2 2"/>
<path d="M311.0 648.5 H1037" stroke="#e3e3e3" stroke-width="1" stroke-dasharray="2 2"/>
<path d="M311.0 642.5 H1037" stroke="#e3e3e3" stroke-width="1" stroke-dasharray="2 2"/>
<path d="M311.0 638.5 H1037" stroke="#e3e3e3" stroke-width="1" stroke-dasharray="2 2"/>
<path d="M311.0 635.5 H1037" stroke="#e3e3e3" stroke-width="1" stroke-dasharray="2 2"/>
<path d="M311.0 633.5 H1037" stroke="#e3e3e3" stroke-width="1" stroke-dasharray="2 2"/>
<path d="M311.0 631.5 H1037" stroke="#e3e3e3" stroke-width="1" stroke-dasharray="2 2"/>
<path d="M311.0 629.5 H1037" stroke="#e3e3e3" stroke-width="1" stroke-dasharray="2 2"/>
<path d="M311.0 628.5 H1037" stroke="#e3e3e3" stroke-width="1" stroke-dasharray="2 2"/>
<path d="M311.0 626.5 H1037" stroke="#d0d0d0" stroke-width="1" stroke-dasharray="2 2"/>
<path d="M311.0 617.5 H1037" stroke="#e3e3e3" stroke-width="1" stroke-dasharray="2 2"/>
<path d="M311.0 611.5 H1037" stroke="#e3e3e3" stroke-width="1" stroke-dasharray="2 2"/>
<path d="M311.0 607.5 H1037" stroke="#e3e3e3" stroke-width="1" stroke-dasharray="2 2"/>
<path d="M311.0 605.5 H1037" stroke="#e3e3e3" stroke-width="1" stroke-dasharray="2 2"/>
<path d="M311.0 602.5 H1037" stroke="#e3e3e3" stroke-width="1" stroke-dasharray="2 2"/>
<path d="M311.0 600.5 H1037" stroke="#e3e3e3" stroke-width="1" stroke-dasharray="2 2"/>
<path d="M311.0 598.5 H1037" stroke="#e3e3e3" stroke-width="1" stroke-dasharray="2 2"/>
<path d="M311.0 597.5 H1037" stroke="#e3e3e3" stroke-width="1" stroke-dasharray="2 2"/>
<path d="M311.0 595.5 H1037" stroke="#d0d0d0" stroke-width="1" stroke-dasharray="2 2"/>
<path d="M311.0 586.5 H1037" stroke="#e3e3e3" stroke-width="1" stroke-dasharray="2 2"/>
<path d="M311.0 580.5 H1037" stroke="#e3e3e3" stroke-width="1" stroke-dasharray="2 2"/>
<path d="M311.0 577.5 H1037" stroke="#e3e3e3" stroke-width="1" stroke-dasharray="2 2"/>
<path d="M311.0 574.5 H1037" stroke="#e3e3e3" stroke-width="1" stroke-dasharray="2 2"/>
<path d="M311.0 571.5 H1037" stroke="#e3e3e3" stroke-width="1" stroke-dasharray="2 2"/>
<path d="M311.0 569.5 H1037" stroke="#e3e3e3" stroke-width="1" stroke-dasharray="2 2"/>
<path d="M311.0 567.5 H1037" stroke="#e3e3e3" stroke-width="1" stroke-dasharray="2 2"/>
<path d="M311.0 566.5 H1037" stroke="#e3e3e3" stroke-width="1" stroke-dasharray="2 2"/>
<path d="M311.0 564.5 H1037" stroke="#d0d0d0" stroke-width="1" stroke-dasharray="2 2"/>
<path d="M311.0 555.5 H1037" stroke="#e3e3e3" stroke-width="1" stroke-dasharray="2 2"/>
<path d="M311.0 550.5 H1037" stroke="#e3e3e3" stroke-width="1" stroke-dasharray="2 2"/>
<path d="M311.0 546.5 H1037" stroke="#e3e3e3" stroke-width="1" stroke-dasharray="2 2"/>
<path d="M311.0 543.5 H1037" stroke="#e3e3e3" stroke-width="1" stroke-dasharray="2 2"/>
<path d="M311.0 540.5 H1037" stroke="#e3e3e3" stroke-width="1" stroke-dasharray="2 2"/>
<path d="M311.0 538.5 H1037" stroke="#e3e3e3" stroke-width="1" stroke-dasharray="2 2"/>
<path d="M311.0 536.5 H1037" stroke="#e3e3e3" stroke-width="1" stroke-dasharray="2 2"/>
<path d="M311.0 535.5 H1037" stroke="#e3e3e3" stroke-width="1" stroke-dasharray="2 2"/>
<path d="M311.0 533.5 H1037" stroke="#d0d0d0" stroke-width="1" stroke-dasharray="2 2"/>
<path d="M311.0 524.5 H1037" stroke="#e3e3e3" stroke-width="1" stroke-dasharray="2 2"/>
<path d="M311.0 519.5 H1037" stroke="#e3e3e3" stroke-width="1" stroke-dasharray="2 2"/>
<path d="M311.0 515.5 H1037" stroke="#e3e3e3" stroke-width="1" stroke-dasharray="2 2"/>
<path d="M311.0 512.5 H1037" stroke="#e3e3e3" stroke-width="1" stroke-dasharray="2 2"/>
<path d="M311.0 509.5 H1037" stroke="#e3e3e3" stroke-width="1" stroke-dasharray="2 2"/>
<path d="M311.0 507.5 H1037" stroke="#e3e3e3" stroke-width="1" stroke-dasharray="2 2"/>
<path d="M311.0 505.5 H1037" stroke="#e3e3e3" stroke-width="1" stroke-dasharray="2 2"/>
<path d="M311.0 504.5 H1037" stroke="#e3e3e3" stroke-width="1" stroke-dasharray="2 2"/>
<path d="M311.0 502.5 H1037" stroke="#d0d0d0" stroke-width="1" stroke-dasharray="2 2"/>
<path d="M311.0 493.5 H1037" stroke="#e3e3e3" stroke-width="1" stroke-dasharray="2 2"/>
<path d="M311.0 488.5 H1037" stroke="#e3e3e3" stroke-width="1" stroke-dasharray="2 2"/>
<path d="M311.0 484.5 H1037" stroke="#e3e3e3" stroke-width="1" stroke-dasharray="2 2"/>
<path d="M311.0 481.5 H1037" stroke="#e3e3e3" stroke-width="1" stroke-dasharray="2 2"/>
<path d="M311.0 478.5 H1037" stroke="#e3e3e3" stroke-width="1" stroke-dasharray="2 2"/>
<path d="M311.0 476.5 H1037" stroke="#e3e3e3" stroke-width="1" stroke-dasharray="2 2"/>
<path d="M311.0 475.5 H1037" stroke="#e3e3e3" stroke-width="1" stroke-dasharray="2 2"/>
<path d="M311.0 473.5 H1037" stroke="#e3e3e3" stroke-width="1" stroke-dasharray="2 2"/>
<path d="M311.0 472.5 H1037" stroke="#d0d0d0" stroke-width="1" stroke-dasharray="2 2"/>
<path d="M311.0 462.5 H1037" stroke="#e3e3e3" stroke-width="1" stroke-dasharray="2 2"/>
<path d="M311.0 457.5 H1037" stroke="#e3e3e3" stroke-width="1" stroke-dasharray="2 2"/>
<path d="M311.0 453.5 H1037" stroke="#e3e3e3" stroke-width="1" stroke-dasharray="2 2"/>
<path d="M311.0 450.5 H1037" stroke="#e3e3e3" stroke-width="1" stroke-dasharray="2 2"/>
<path d="M311.0 448.5 H1037" stroke="#e3e3e3" stroke-width="1" stroke-dasharray="2 2"/>
<path d="M311.0 445.5 H1037" stroke="#e3e3e3" stroke-width="1" stroke-dasharray="2 2"/>
<path d="M311.0 444.5 H1037" stroke="#e3e3e3" stroke-width="1" stroke-dasharray="2 2"/>
<path d="M311.0 442.5 H1037" stroke="#e3e3e3" stroke-width="1" stroke-dasharray="2 2"/>
<path d="M311.0 441.5 H1037" stroke="#d0d0d0" stroke-width="1" stroke-dasharray="2 2"/>
<path d="M311.0 431.5 H1037" stroke="#e3e3e3" stroke-width="1" stroke-dasharray="2 2"/>
<path d="M311.0 426.5 H1037" stroke="#e3e3e3" stroke-width="1" stroke-dasharray="2 2"/>
<path d="M311.0 422.5 H1037" stroke="#e3e3e3" stroke-width="1" stroke-dasharray="2 2"/>
<path d="M311.0 419.5 H1037" stroke="#e3e3e3" stroke-width="1" stroke-dasharray="2 2"/>
<path d="M311.0 417.5 H1037" stroke="#e3e3e3" stroke-width="1" stroke-dasharray="2 2"/>
<path d="M311.0 415.5 H1037" stroke="#e3e3e3" stroke-width="1" stroke-dasharray="2 2"/>
<path d="M311.0 413.5 H1037" stroke="#e3e3e3" stroke-width="1" stroke-dasharray="2 2"/>
<path d="M311.0 411.5 H1037" stroke="#e3e3e3" stroke-width="1" stroke-dasharray="2 2"/>
<path d="M311.0 410.5 H1037" stroke="#d0d0d0" stroke-width="1" stroke-dasharray="2 2"/>
<path d="M311.0 400.5 H1037" stroke="#e3e3e3" stroke-width="1" stroke-dasharray="2 2"/>
<path d="M311.0 395.5 H1037" stroke="#e3e3e3" stroke-width="1" stroke-dasharray="2 2"/>
<path d="M311.0 391.5 H1037" stroke="#e3e3e3" stroke-width="1" stroke-dasharray="2 2"/>
<path d="M311.0 388.5 H1037" stroke="#e3e3e3" stroke-width="1" stroke-dasharray="2 2"/>
<path d="M311.0 386.5 H1037" stroke="#e3e3e3" stroke-width="1" stroke-dasharray="2 2"/>
<path d="M311.0 384.5 H1037" stroke="#e3e3e3" stroke-width="1" stroke-dasharray="2 2"/>
<path d="M311.0 382.5 H1037" stroke="#e3e3e3" stroke-width="1" stroke-dasharray="2 2"/>
<path d="M311.0 380.5 H1037" stroke="#e3e3e3" stroke-width="1" stroke-dasharray="2 2"/>
<path d="M311.0 379.5 H1037" stroke="#d0d0d0" stroke-width="1" stroke-dasharray="2 2"/>
<path d="M311.0 370.5 H1037" stroke="#e3e3e3" stroke-width="1" stroke-dasharray="2 2"/>
<path d="M311.0 364.5 H1037" stroke="#e3e3e3" stroke-width="1" stroke-dasharray="2 2"/>
<path d="M311.0 360.5 H1037" stroke="#e3e3e3" stroke-width="1" stroke-dasharray="2 2"/>
<path d="M311.0 357.5 H1037" stroke="#e3e3e3" stroke-width="1" stroke-dasharray="2 2"/>
<path d="M311.0 355.5 H1037" stroke="#e3e3e3" stroke-width="1" stroke-dasharray="2 2"/>
<path d="M311.0 353.5 H1037" stroke="#e3e3e3" stroke-width="1" stroke-dasharray="2 2"/>
<path d="M311.0 351.5 H1037" stroke="#e3e3e3" stroke-width="1" stroke-dasharray="2 2"/>
<path d="M311.0 349.5 H1037" stroke="#e3e3e3" stroke-width="1" stroke-dasharray="2 2"/>
<path d="M311.0 348.5 H1037.5" stroke="#9a9a9a" stroke-width="1"/><path d="M1037.5 348.0 V718" stroke="#c4c4c4" stroke-width="1"/>
<path d="M327.1 503.7 L343.4 528.7 L359.8 518.7 L376.6 530.9 L392.9 509.6 L409.2 524.1 L426.0 518.7 L442.4 528.7 L458.7 517.3 L475.5 524.1 L491.8 518.7 L508.6 522.3 L525.0 515.1 L541.3 506.0 L558.1 499.2 L574.4 496.9 L590.8 506.0 L607.6 510.5 L623.9 506.0 L640.2 500.5 L657.0 496.9 L673.4 496.0 L689.7 495.1 L706.5 492.4 L722.8 489.7 L739.2 487.8 L756.0 484.2 L772.3 476.5 L788.6 466.1 L805.4 460.6 L821.8 453.8 L838.1 447.9 L854.9 442.5 L871.2 438.8 L887.6 435.6 L904.4 432.5 L920.7 429.7 L937.0 427.9 L953.8 426.6 L970.2 425.2 L986.5 424.3 L1003.3 423.4 L1019.6 422.9 L1036.0 422.5" stroke="#eeeeee" stroke-width="1.2" stroke-linejoin="round" opacity="1"/>
<path d="M327.1 515.1 L343.4 506.0 L359.8 524.1 L376.6 515.1 L392.9 560.4 L409.2 521.9 L426.0 530.9 L442.4 515.1 L458.7 528.7 L475.5 517.3 L491.8 526.4 L508.6 518.7 L525.0 530.9 L541.3 515.1 L558.1 506.0 L574.4 501.4 L590.8 515.1 L607.6 524.1 L623.9 510.5 L640.2 506.0 L657.0 503.7 L673.4 524.1 L689.7 492.4 L706.5 494.6 L722.8 491.5 L739.2 492.4 L756.0 494.6 L772.3 492.4 L788.6 491.5 L805.4 490.6 L821.8 488.7 L838.1 487.8 L854.9 486.0 L871.2 485.1 L887.6 484.2 L904.4 483.3 L920.7 482.8 L937.0 482.4 L953.8 481.9 L970.2 481.5 L986.5 481.5 L1003.3 481.0 L1019.6 481.0 L1036.0 481.0" stroke="#f2f2f2" stroke-width="1.2" stroke-linejoin="round" opacity="1"/>
<path d="M706.5 496.9 L722.8 493.3 L739.2 490.6 L756.0 483.3 L772.3 474.2 L788.6 469.7 L805.4 462.9 L821.8 456.1 L838.1 449.3 L854.9 444.7 L871.2 440.2 L887.6 437.0 L904.4 434.3 L920.7 432.0 L937.0 429.7 L953.8 428.8 L970.2 427.5 L986.5 426.6 L1003.3 426.1 L1019.6 425.7 L1036.0 425.7" stroke="#efefef" stroke-width="1.2" stroke-linejoin="round" opacity="1"/>
<path d="M327.1 461.5 L343.4 455.2 L359.8 452.4 L376.6 448.8 L392.9 448.4 L409.2 446.1 L426.0 445.2 L442.4 445.2 L458.7 444.3 L475.5 444.3 L491.8 443.4 L508.6 442.5 L525.0 442.5 L541.3 441.5 L558.1 441.1 L574.4 439.7 L590.8 438.8 L607.6 437.0 L623.9 435.2 L640.2 432.0 L657.0 427.5 L673.4 421.1 L689.7 414.3 L706.5 407.5 L722.8 401.6 L739.2 397.1 L756.0 393.4 L772.3 390.7 L788.6 388.9 L805.4 387.5 L821.8 386.6 L838.1 385.7 L854.9 384.8 L871.2 383.9 L887.6 383.9 L904.4 383.5 L920.7 382.5 L937.0 382.5 L953.8 382.1 L970.2 382.1 L986.5 381.6 L1003.3 381.6 L1019.6 381.6 L1036.0 381.6" stroke="#b8322c" stroke-width="1.05" stroke-linejoin="round" opacity="1"/>
<path d="M640.2 456.5 L657.0 440.2 L673.4 427.0 L689.7 416.1 L706.5 408.0 L722.8 401.2 L739.2 396.6 L756.0 392.5 L772.3 389.4 L788.6 387.5 L805.4 386.2 L821.8 385.3 L838.1 384.4 L854.9 383.5 L871.2 382.5 L887.6 382.5 L904.4 382.1 L920.7 381.6 L937.0 381.2 L953.8 380.7 L970.2 380.7 L986.5 380.3 L1003.3 380.3 L1019.6 380.3 L1036.0 380.3" stroke="#c0241f" stroke-width="1.05" stroke-linejoin="round" opacity="1"/>
<path d="M756.0 483.3 L772.3 462.9 L788.6 449.3 L805.4 442.5 L821.8 435.6 L838.1 431.1 L854.9 427.9 L871.2 425.2 L887.6 422.9 L904.4 421.1 L920.7 419.3 L937.0 418.4 L953.8 417.0 L970.2 416.1 L986.5 415.2 L1003.3 414.3 L1019.6 413.4 L1036.0 413.4" stroke="#3fd0e0" stroke-width="1.05" stroke-linejoin="round" opacity="1"/>
<path d="M772.3 473.3 L788.6 460.6 L805.4 450.6 L821.8 448.4 L838.1 441.5 L854.9 438.8 L871.2 436.6 L887.6 434.7 L904.4 433.4 L920.7 432.5 L937.0 431.6 L953.8 431.1 L970.2 430.7 L986.5 430.2 L1003.3 429.3 L1019.6 430.2 L1036.0 430.2" stroke="#34c4de" stroke-width="1.05" stroke-linejoin="round" opacity="1"/>
<path d="M788.6 472.0 L805.4 458.3 L821.8 450.6 L838.1 443.8 L854.9 439.7 L871.2 436.1 L887.6 434.3 L904.4 432.5 L920.7 431.6 L937.0 430.7 L953.8 429.7 L970.2 429.3 L986.5 429.3 L1003.3 429.3 L1019.6 429.3 L1036.0 429.7" stroke="#e6e05a" stroke-width="1.05" stroke-linejoin="round" opacity="1"/>
<path d="M821.8 472.4 L838.1 459.7 L854.9 451.5 L871.2 447.0 L887.6 443.4 L904.4 441.1 L920.7 439.3 L937.0 438.4 L953.8 437.9 L970.2 437.5 L986.5 437.0 L1003.3 437.5 L1019.6 437.5 L1036.0 437.5" stroke="#4cd83a" stroke-width="1.05" stroke-linejoin="round" opacity="1"/>
<path d="M805.4 496.0 L821.8 479.7 L838.1 456.1 L854.9 452.4 L871.2 448.4 L887.6 445.2 L904.4 443.4 L920.7 442.9 L937.0 441.5 L953.8 441.1 L970.2 441.1 L986.5 441.1 L1003.3 441.1 L1019.6 441.5 L1036.0 442.0" stroke="#d8dc3a" stroke-width="1.05" stroke-linejoin="round" opacity="1"/>
<path d="M377.0 472.9 L393.4 492.2 L410.0 473.6 L426.4 485.6 L443.1 476.4 L459.5 486.7" stroke="#2c2ca8" stroke-width="1.0" stroke-linejoin="round" opacity="1"/>
<path d="M393.4 489.6 L410.0 492.6 L426.4 482.3 L443.1 487.8 L459.5 493.3" stroke="#2c2ca8" stroke-width="1.0" stroke-linejoin="round" opacity="1"/>
<path d="M525.5 494.4 L541.9 497.0" stroke="#2c2ca8" stroke-width="1.0" stroke-linejoin="round" opacity="1"/>
<path d="M393.4 513.6 L410.0 498.8 L426.4 483.4 L443.1 507.5 L459.5 475.8 L475.9 474.3 L492.5 469.9 L508.9 476.9 L525.5 470.3 L541.9 472.5 L558.3 473.2 L575.0 469.2 L591.4 479.1 L608.0 480.6 L624.4 477.5 L641.0 498.3 L657.4 482.3 L673.8 488.5 L690.5 485.0" stroke="#d13ad0" stroke-width="1.0" stroke-linejoin="round" opacity="1"/>
<path d="M426.4 481.3 L443.1 500.9 L459.5 490.0 L475.9 479.1 L492.5 496.6" stroke="#d13ad0" stroke-width="1.0" stroke-linejoin="round" opacity="1"/>
<path d="M525.5 488.3 L541.9 509.3" stroke="#d13ad0" stroke-width="1.0" stroke-linejoin="round" opacity="1"/>
<path d="M377.0 479.1 L393.4 484.5 L410.0 472.9 L426.4 474.7 L443.1 474.7 L459.5 475.8 L475.9 476.9 L492.5 481.3 L508.9 475.8 L525.5 483.4 L541.9 502.0 L558.3 485.2" stroke="#e8e040" stroke-width="1.0" stroke-linejoin="round" opacity="1"/>
<path d="M525.5 485.6 L541.9 494.4 L558.3 503.8" stroke="#e8e040" stroke-width="1.0" stroke-linejoin="round" opacity="1"/>
<path d="M591.4 495.5 L608.0 506.4 L624.4 480.2 L641.0 488.3" stroke="#e8e040" stroke-width="1.0" stroke-linejoin="round" opacity="1"/>
<path d="M608.0 491.1 L624.4 484.5" stroke="#e8e040" stroke-width="1.0" stroke-linejoin="round" opacity="1"/>
<path d="M673.8 549.5 L690.5 506.4" stroke="#e8e040" stroke-width="1.0" stroke-linejoin="round" opacity="1"/>
<path d="M393.4 493.3 L410.0 483.4 L426.4 469.9 L443.1 474.7 L459.5 475.8 L475.9 483.4 L492.5 471.4 L508.9 465.9 L525.5 476.9 L541.9 481.9 L558.3 475.3 L575.0 473.6 L591.4 473.6 L608.0 484.5" stroke="#3fcc4a" stroke-width="1.0" stroke-linejoin="round" opacity="1"/>
<path d="M410.0 485.6 L426.4 473.6 L443.1 474.3 L459.5 475.8 L475.9 479.1 L492.5 470.3 L508.9 490.0 L525.5 510.3 L541.9 487.8 L558.3 542.5" stroke="#3fcc4a" stroke-width="1.0" stroke-linejoin="round" opacity="1"/>
<path d="M393.4 490.4 L410.0 481.3 L426.4 472.5 L443.1 473.6 L459.5 474.7 L475.9 473.6 L492.5 474.7 L508.9 475.8 L525.5 479.1 L541.9 485.6" stroke="#a4dc3a" stroke-width="1.0" stroke-linejoin="round" opacity="1"/>
<path d="M426.4 465.5 L443.1 469.2 L459.5 466.4 L475.9 469.2 L492.5 465.3 L508.9 465.3 L525.5 463.1 L541.9 487.8 L558.3 470.8 L575.0 470.8 L591.4 472.5 L608.0 474.7" stroke="#3ccfe0" stroke-width="1.0" stroke-linejoin="round" opacity="1"/>
<path d="M426.4 469.2 L443.1 470.3 L459.5 473.6 L475.9 466.4 L492.5 472.5 L508.9 473.6 L525.5 480.2" stroke="#3ccfe0" stroke-width="1.0" stroke-linejoin="round" opacity="1"/>
<path d="M311.0 431.5 H1037" stroke="#8db2e3" stroke-width="3.2"/>
<path d="M310.5 348.0 V718.5 H1037.5" stroke="#858585" stroke-width="1"/>
<path d="M308.0 719.5 H311.0" stroke="#7d7d7d" stroke-width="1"/>
<path d="M308.0 688.5 H311.0" stroke="#7d7d7d" stroke-width="1"/>
<path d="M308.0 657.5 H311.0" stroke="#7d7d7d" stroke-width="1"/>
<path d="M308.0 626.5 H311.0" stroke="#7d7d7d" stroke-width="1"/>
<path d="M308.0 595.5 H311.0" stroke="#7d7d7d" stroke-width="1"/>
<path d="M308.0 564.5 H311.0" stroke="#7d7d7d" stroke-width="1"/>
<path d="M308.0 533.5 H311.0" stroke="#7d7d7d" stroke-width="1"/>
<path d="M308.0 502.5 H311.0" stroke="#7d7d7d" stroke-width="1"/>
<path d="M308.0 472.5 H311.0" stroke="#7d7d7d" stroke-width="1"/>
<path d="M308.0 441.5 H311.0" stroke="#7d7d7d" stroke-width="1"/>
<path d="M308.0 410.5 H311.0" stroke="#7d7d7d" stroke-width="1"/>
<path d="M308.0 379.5 H311.0" stroke="#7d7d7d" stroke-width="1"/>
<path d="M308.0 348.5 H311.0" stroke="#7d7d7d" stroke-width="1"/>
<path d="M327.5 718.5 V721" stroke="#858585" stroke-width="1"/>
<path d="M360.5 718.5 V721" stroke="#858585" stroke-width="1"/>
<path d="M393.5 718.5 V721" stroke="#858585" stroke-width="1"/>
<path d="M426.5 718.5 V721" stroke="#858585" stroke-width="1"/>
<path d="M459.5 718.5 V721" stroke="#858585" stroke-width="1"/>
<path d="M492.5 718.5 V721" stroke="#858585" stroke-width="1"/>
<path d="M525.5 718.5 V721" stroke="#858585" stroke-width="1"/>
<path d="M558.5 718.5 V721" stroke="#858585" stroke-width="1"/>
<path d="M591.5 718.5 V721" stroke="#858585" stroke-width="1"/>
<path d="M624.5 718.5 V721" stroke="#858585" stroke-width="1"/>
<path d="M657.5 718.5 V721" stroke="#858585" stroke-width="1"/>
<path d="M690.5 718.5 V721" stroke="#858585" stroke-width="1"/>
<path d="M723.5 718.5 V721" stroke="#858585" stroke-width="1"/>
<path d="M756.5 718.5 V721" stroke="#858585" stroke-width="1"/>
<path d="M789.5 718.5 V721" stroke="#858585" stroke-width="1"/>
<path d="M822.5 718.5 V721" stroke="#858585" stroke-width="1"/>
<path d="M855.5 718.5 V721" stroke="#858585" stroke-width="1"/>
<path d="M888.5 718.5 V721" stroke="#858585" stroke-width="1"/>
<path d="M921.5 718.5 V721" stroke="#858585" stroke-width="1"/>
<path d="M954.5 718.5 V721" stroke="#858585" stroke-width="1"/>
<path d="M987.5 718.5 V721" stroke="#858585" stroke-width="1"/>
<path d="M1020.5 718.5 V721" stroke="#858585" stroke-width="1"/>
</svg>
<div class="t " style="right:1616px;top:342.2px;font-size:10.5px;line-height:14px;font-weight:normal;color:#111;">1000000</div>
<div class="t " style="right:1616px;top:373.1px;font-size:10.5px;line-height:14px;font-weight:normal;color:#111;">100000</div>
<div class="t " style="right:1616px;top:404.0px;font-size:10.5px;line-height:14px;font-weight:normal;color:#111;">10000</div>
<div class="t " style="right:1616px;top:434.9px;font-size:10.5px;line-height:14px;font-weight:normal;color:#111;">1000</div>
<div class="t " style="right:1616px;top:465.8px;font-size:10.5px;line-height:14px;font-weight:normal;color:#111;">100</div>
<div class="t " style="right:1616px;top:496.7px;font-size:10.5px;line-height:14px;font-weight:normal;color:#111;">10</div>
<div class="t " style="right:1616px;top:527.6px;font-size:10.5px;line-height:14px;font-weight:normal;color:#111;">1</div>
<div class="t " style="right:1616px;top:558.5px;font-size:10.5px;line-height:14px;font-weight:normal;color:#111;">0.1</div>
<div class="t " style="right:1616px;top:589.4px;font-size:10.5px;line-height:14px;font-weight:normal;color:#111;">0.01</div>
<div class="t " style="right:1616px;top:620.3px;font-size:10.5px;line-height:14px;font-weight:normal;color:#111;">0.001</div>
<div class="t " style="right:1616px;top:651.2px;font-size:10.5px;line-height:14px;font-weight:normal;color:#111;">0.0001</div>
<div class="t " style="right:1616px;top:682.1px;font-size:10.5px;line-height:14px;font-weight:normal;color:#111;">0.00001</div>
<div class="t " style="right:1616px;top:713.0px;font-size:10.5px;line-height:14px;font-weight:normal;color:#111;">0.000001</div>
<div class="t " style="left:27.5px;width:600px;text-align:center;top:723.7px;font-size:8px;line-height:10px;font-weight:normal;color:#222;">2</div>
<div class="t " style="left:60.5px;width:600px;text-align:center;top:723.7px;font-size:8px;line-height:10px;font-weight:normal;color:#222;">4</div>
<div class="t " style="left:93.5px;width:600px;text-align:center;top:723.7px;font-size:8px;line-height:10px;font-weight:normal;color:#222;">6</div>
<div class="t " style="left:126.5px;width:600px;text-align:center;top:723.7px;font-size:8px;line-height:10px;font-weight:normal;color:#222;">8</div>
<div class="t " style="left:159.5px;width:600px;text-align:center;top:723.7px;font-size:8px;line-height:10px;font-weight:normal;color:#222;">10</div>
<div class="t " style="left:192.5px;width:600px;text-align:center;top:723.7px;font-size:8px;line-height:10px;font-weight:normal;color:#222;">12</div>
<div class="t " style="left:225.5px;width:600px;text-align:center;top:723.7px;font-size:8px;line-height:10px;font-weight:normal;color:#222;">14</div>
<div class="t " style="left:258.5px;width:600px;text-align:center;top:723.7px;font-size:8px;line-height:10px;font-weight:normal;color:#222;">16</div>
<div class="t " style="left:291.5px;width:600px;text-align:center;top:723.7px;font-size:8px;line-height:10px;font-weight:normal;color:#222;">18</div>
<div class="t " style="left:324.5px;width:600px;text-align:center;top:723.7px;font-size:8px;line-height:10px;font-weight:normal;color:#222;">20</div>
<div class="t " style="left:357.5px;width:600px;text-align:center;top:723.7px;font-size:8px;line-height:10px;font-weight:normal;color:#222;">22</div>
<div class="t " style="left:390.5px;width:600px;text-align:center;top:723.7px;font-size:8px;line-height:10px;font-weight:normal;color:#222;">24</div>
<div class="t " style="left:423.5px;width:600px;text-align:center;top:723.7px;font-size:8px;line-height:10px;font-weight:normal;color:#222;">26</div>
<div class="t " style="left:456.5px;width:600px;text-align:center;top:723.7px;font-size:8px;line-height:10px;font-weight:normal;color:#222;">28</div>
<div class="t " style="left:489.5px;width:600px;text-align:center;top:723.7px;font-size:8px;line-height:10px;font-weight:normal;color:#222;">30</div>
<div class="t " style="left:522.5px;width:600px;text-align:center;top:723.7px;font-size:8px;line-height:10px;font-weight:normal;color:#222;">32</div>
<div class="t " style="left:555.5px;width:600px;text-align:center;top:723.7px;font-size:8px;line-height:10px;font-weight:normal;color:#222;">34</div>
<div class="t " style="left:588.5px;width:600px;text-align:center;top:723.7px;font-size:8px;line-height:10px;font-weight:normal;color:#222;">36</div>
<div class="t " style="left:621.5px;width:600px;text-align:center;top:723.7px;font-size:8px;line-height:10px;font-weight:normal;color:#222;">38</div>
<div class="t " style="left:654.5px;width:600px;text-align:center;top:723.7px;font-size:8px;line-height:10px;font-weight:normal;color:#222;">40</div>
<div class="t " style="left:687.5px;width:600px;text-align:center;top:723.7px;font-size:8px;line-height:10px;font-weight:normal;color:#222;">42</div>
<div class="t " style="left:720.5px;width:600px;text-align:center;top:723.7px;font-size:8px;line-height:10px;font-weight:normal;color:#222;">44</div>
<div class="t " style="left:374px;width:600px;text-align:center;top:736.5px;font-size:11.8px;line-height:15px;font-weight:normal;color:#111;">Cycle</div>
<div class="t " style="left:336px;width:600px;text-align:center;top:330.0px;font-size:10.5px;line-height:14px;font-weight:normal;color:#111;">Amplification Plot</div>
<div class="t" style="left:207px;top:527px;width:80px;height:14px;line-height:14px;font-size:12px;text-align:center;transform:rotate(-90deg);color:#111;">ΔRn</div>
<div class="t" style="left:311px;top:417.5px;font-family:'Liberation Serif',serif;font-weight:bold;font-size:14px;line-height:18px;color:#a51b1b;">2,000.0</div>
<div class="abs" style="left:230px;top:764px;width:813px;height:59px;box-sizing:border-box;border:1px solid #1d4f6b;"></div>
<div class="abs" style="left:238px;top:760px;width:28px;height:8px;background:#fff;"></div>
<div class="t " style="left:240px;top:759.5px;font-size:7px;line-height:9px;font-weight:normal;color:#1b5474;letter-spacing:-0.060px;">Legend</div>
<div class="abs" style="left:233px;top:775px;width:16px;height:12px;background:linear-gradient(100deg,#e02a22,#f07a2e);"></div>
<div class="t " style="left:253px;top:774.0px;font-size:12px;line-height:16px;font-weight:normal;color:#111;">A</div>
<div class="abs" style="left:270px;top:775px;width:16px;height:12px;background:linear-gradient(100deg,#e0e43a,#9cd63a);"></div>
<div class="t " style="left:290px;top:774.0px;font-size:12px;line-height:16px;font-weight:normal;color:#111;">B</div>
<div class="abs" style="left:308px;top:775px;width:16px;height:12px;background:linear-gradient(100deg,#22e23a,#48e66a);"></div>
<div class="t " style="left:328px;top:774.0px;font-size:12px;line-height:16px;font-weight:normal;color:#111;">C</div>
<div class="abs" style="left:347px;top:775px;width:16px;height:12px;background:linear-gradient(100deg,#34cfe8,#2e8ee2);"></div>
<div class="t " style="left:367px;top:774.0px;font-size:12px;line-height:16px;font-weight:normal;color:#111;">D</div>
<div class="abs" style="left:386px;top:775px;width:16px;height:12px;background:linear-gradient(100deg,#2a24d4,#6a22d2);"></div>
<div class="t " style="left:406px;top:774.0px;font-size:12px;line-height:16px;font-weight:normal;color:#111;">E</div>
<div class="abs" style="left:424px;top:775px;width:16px;height:12px;background:linear-gradient(100deg,#e224c8,#f23aa0);"></div>
<div class="t " style="left:444px;top:774.0px;font-size:12px;line-height:16px;font-weight:normal;color:#111;">F</div>
<div class="abs" style="left:228px;top:826px;width:67px;height:18px;box-sizing:border-box;border:1px solid #1d4f6b;border-bottom:none;border-radius:12px 12px 0 0;background:#fff9c9;"></div>
<div class="abs" style="left:228px;top:842px;width:817px;height:93px;box-sizing:border-box;border:1px solid #1d4f6b;background:#fff9c9;"></div>
<div class="abs" style="left:229px;top:842px;width:65px;height:2px;background:#fff9c9;"></div>
<div class="t " style="left:240px;top:827.0px;font-size:12px;line-height:16px;font-weight:bold;color:#1b5474;letter-spacing:-0.190px;">Options</div>
<div class="t " style="left:239px;top:854.0px;font-size:12px;line-height:16px;font-weight:normal;color:#000;letter-spacing:0.330px;">Target:</div>
<div class="abs" style="left:282px;top:850px;width:148px;height:22px;box-sizing:border-box;border:1px solid #b9b9b9;background:#fdf9cf;"></div>
<div class="abs" style="left:411px;top:851px;width:18px;height:20px;background:#fff;"></div>
<div class="t " style="left:284px;top:854.0px;font-size:12px;line-height:16px;font-weight:normal;color:#000;letter-spacing:0.163px;">Mykoplasmen-Operon</div>
<svg style="left:414px;top:858.5px" width="10" height="7" viewBox="0 0 10 7" fill="none" stroke="#444" stroke-width="1.1"><path d="M1 1.2 L5 5.2 L9 1.2"/></svg>
<div class="t " style="left:435px;top:854.0px;font-size:12px;line-height:16px;font-weight:normal;color:#000;letter-spacing:0.230px;">Threshold:</div>
<div class="cb" style="left:503px;top:855px;"></div>
<div class="t " style="left:520px;top:854.0px;font-size:12px;line-height:16px;font-weight:normal;color:#000;letter-spacing:-0.172px;">Auto</div>
<div class="abs" style="left:553px;top:850px;width:116px;height:22px;box-sizing:border-box;border:1px solid #b9b9b9;background:#fff;"></div>
<div class="t " style="left:556px;top:854.0px;font-size:12px;line-height:16px;font-weight:normal;color:#000;letter-spacing:0.324px;">2000</div>
<div class="abs" style="left:678px;top:855px;width:13px;height:13px;border-radius:3px;background:#0e63bd;"></div>
<svg style="left:678px;top:855px" width="13" height="13" viewBox="0 0 13 13" fill="none" stroke="#fff" stroke-width="1.2"><path d="M3 6.8 L5.4 9.2 L10 4.2"/></svg>
<div class="t " style="left:695px;top:854.0px;font-size:12px;line-height:16px;font-weight:normal;color:#000;letter-spacing:0.149px;">Auto Baseline</div>
<div class="t " style="left:234px;top:898.0px;font-size:12px;line-height:16px;font-weight:normal;color:#000;letter-spacing:-0.072px;">Show:</div>
<div class="abs" style="left:275px;top:899px;width:13px;height:13px;border-radius:3px;background:#0e63bd;"></div>
<svg style="left:275px;top:899px" width="13" height="13" viewBox="0 0 13 13" fill="none" stroke="#fff" stroke-width="1.2"><path d="M3 6.8 L5.4 9.2 L10 4.2"/></svg>
<div class="t " style="left:292px;top:898.0px;font-size:12px;line-height:16px;font-weight:normal;color:#000;letter-spacing:0.292px;">Threshold</div>
<div style="position:absolute;left:352px;top:905.5px;width:16px;height:2px;background:#111;"></div>
<div class="cb" style="left:372px;top:899px;"></div>
<div class="t " style="left:389px;top:898.0px;font-size:12px;line-height:16px;font-weight:normal;color:#000;letter-spacing:0.175px;">Baseline Start: Well</div>
<div style="position:absolute;left:500px;top:900.5px;width:9px;height:10px;background:#1ee01e;"></div>
<div style="position:absolute;left:509px;top:900.5px;width:4px;height:10px;background:#f4f4e4;border:1px solid #c8c8b8;box-sizing:border-box;"></div>
<div class="t " style="left:516px;top:898.0px;font-size:12px;line-height:16px;font-weight:normal;color:#000;letter-spacing:0.273px;">Target</div>
<svg style="left:553px;top:899px" width="15" height="12" viewBox="0 0 15 12"><path d="M7.5 2.5 L13.8 10.5 H1.2 Z" fill="#f4fbe8" stroke="#2a9a3a" stroke-width="1"/><path d="M7.5 2.5 L13.8 10.5 H7.5 Z" fill="#3ed04a" stroke="#2a9a3a" stroke-width="0.8"/></svg>
<div class="t " style="left:576px;top:898.0px;font-size:12px;line-height:16px;font-weight:normal;color:#000;letter-spacing:0.194px;">Baseline End: Well</div>
<div style="position:absolute;left:683px;top:900.5px;width:4px;height:10px;background:#f4f4e4;border:1px solid #c8c8b8;box-sizing:border-box;"></div>
<div style="position:absolute;left:687px;top:900.5px;width:9px;height:10px;background:#ee1c1c;"></div>
<div class="t " style="left:699px;top:898.0px;font-size:12px;line-height:16px;font-weight:normal;color:#000;letter-spacing:0.273px;">Target</div>
<svg style="left:736px;top:899px" width="15" height="12" viewBox="0 0 15 12"><path d="M7.5 2.5 L13.8 10.5 H1.2 Z" fill="#fbeee8" stroke="#b82a2a" stroke-width="1"/><path d="M7.5 2.5 L13.8 10.5 H7.5 Z" fill="#e8403a" stroke="#b82a2a" stroke-width="0.8"/></svg>
<svg style="left:1058px;top:146px" width="10" height="40" viewBox="0 0 10 40" fill="none" stroke="#0c1c36" stroke-width="2"><path d="M8 1.5 L2 8 L8 14.5"/><path d="M1.5 23.5 L7.5 30 L1.5 36.5"/></svg>
<div style="position:absolute;left:1060.5px;top:538px;width:1.6px;height:1.6px;background:#333;"></div>
<div style="position:absolute;left:1060.5px;top:542px;width:1.6px;height:1.6px;background:#333;"></div>
<div style="position:absolute;left:1060.5px;top:546px;width:1.6px;height:1.6px;background:#333;"></div>
<div class="abs" style="left:1068px;top:164px;width:843px;height:784px;box-sizing:border-box;border:1px solid #1d4f6b;"></div>
<div class="abs" style="left:1070px;top:166px;width:839px;height:780px;box-sizing:border-box;border:1px solid #1d4f6b;background:#fff;"></div>
<div class="abs" style="left:1072px;top:140px;width:164px;height:27px;box-sizing:border-box;border:1px solid #1d4f6b;border-radius:7px 7px 0 0;background:#fff;"></div>
<div class="t " style="left:1091px;top:142.0px;font-size:16.5px;line-height:21px;font-weight:normal;color:#101010;letter-spacing:-0.341px;-webkit-text-stroke:0.4px #fff;">View Plate Layout</div>
<div class="abs" style="left:1236px;top:140px;width:147px;height:28px;box-sizing:border-box;border:1px solid #1d4f6b;border-bottom:none;border-radius:7px 7px 0 0;background:#fff;"></div>
<div class="abs" style="left:1237px;top:140px;width:145px;height:4px;border-radius:7px 7px 0 0;background:#f0cf3a;"></div>
<div class="abs" style="left:1237px;top:143px;width:145px;height:4px;border-radius:5px 5px 0 0;background:#fff;"></div>
<div class="t " style="left:1245px;top:141.5px;font-size:17px;line-height:22px;font-weight:normal;color:#06101f;letter-spacing:0.528px;-webkit-text-stroke:0.25px #fff;">View Well Table</div>
<div class="t " style="left:1332px;top:177.5px;font-size:12px;line-height:16px;font-weight:normal;color:#111;letter-spacing:0.085px;">Select Wells With:</div>
<div class="abs" style="left:1438px;top:174px;width:102px;height:22px;box-sizing:border-box;border:1px solid #b9b9b9;background:#fff;"></div>
<div class="t " style="left:1441px;top:177.0px;font-size:12px;line-height:16px;font-weight:normal;color:#111;letter-spacing:-0.046px;">- Select Item -</div>
<svg style="left:1524px;top:182.0px" width="10" height="7" viewBox="0 0 10 7" fill="none" stroke="#444" stroke-width="1.1"><path d="M1 1.2 L5 5.2 L9 1.2"/></svg>
<div class="abs" style="left:1545px;top:174px;width:102px;height:22px;box-sizing:border-box;border:1px solid #c9c9c9;background:#f0f0f0;"></div>
<div class="t " style="left:1548px;top:177.5px;font-size:12px;line-height:16px;font-weight:normal;color:#9c9c9c;letter-spacing:-0.046px;">- Select Item -</div>
<svg style="left:1631px;top:182.5px" width="10" height="7" viewBox="0 0 10 7" fill="none" stroke="#c0c0c0" stroke-width="1.1"><path d="M1 1.2 L5 5.2 L9 1.2"/></svg>
<div class="abs" style="left:1076px;top:206px;width:827px;height:37px;box-sizing:border-box;border:1px solid #5f7396;background:#c3d0e8;"></div>
<div class="abs" style="left:1077px;top:211px;width:112px;height:26px;box-sizing:border-box;border:1px solid #3c4a66;background:#c3cfe6;box-shadow:inset 1px 1px 0 #e9eef9, inset -1px -1px 0 #7f8dac, inset -2px -2px 0 #a5b2cf;"></div>
<div class="t " style="left:1087px;top:216.0px;font-size:12px;line-height:16px;font-weight:normal;color:#0a0a0a;letter-spacing:0.269px;">Show in Table</div>
<div class="abs" style="left:1190px;top:211px;width:85px;height:26px;box-sizing:border-box;border:1px solid #3c4a66;background:#c3cfe6;box-shadow:inset 1px 1px 0 #e9eef9, inset -1px -1px 0 #7f8dac, inset -2px -2px 0 #a5b2cf;"></div>
<div class="t " style="left:1200px;top:216.0px;font-size:12px;line-height:16px;font-weight:normal;color:#0a0a0a;letter-spacing:0.037px;">Group By</div>
<svg style="left:1169.5px;top:219.5px" width="9" height="9"><path d="M0 0 H9 L4.5 8.5 Z" fill="#111"/></svg>
<svg style="left:1255px;top:219.5px" width="9" height="9"><path d="M0 0 H9 L4.5 8.5 Z" fill="#111"/></svg>
<svg style="left:1694px;top:213px" width="23" height="19" viewBox="0 0 23 19">
<defs><pattern id="dp1694" width="2" height="2" patternUnits="userSpaceOnUse"><rect width="2" height="2" fill="#b9c8e6"/><rect width="1" height="1" fill="#7d93c6"/></pattern></defs>
<rect x="0" y="0" width="23" height="19" fill="url(#dp1694)"/>
<rect x="0.5" y="0.5" width="22" height="18" fill="none" stroke="#8da1cf" stroke-width="1"/>
<g fill="#6781bb"><rect x="3" y="3" width="3" height="3"/><rect x="7" y="3" width="3" height="3"/><rect x="3" y="7" width="3" height="3"/><rect x="7" y="7" width="2.5" height="3"/><rect x="3" y="11" width="3" height="3"/><rect x="11" y="3" width="2" height="2"/></g>
<circle cx="14.6" cy="10.4" r="4.6" fill="#e4ecf9" stroke="#b5c3e0" stroke-width="0.8"/><path d="M12.2 10.4 H17 M14.6 8 V12.8" stroke="#34425e" stroke-width="1.2"/></svg>
<div class="t " style="left:1722.5px;top:216.0px;font-size:12px;line-height:16px;font-weight:normal;color:#b3bdd3;letter-spacing:-0.072px;text-shadow:1px 1px 0 #f6f8fd;">Expand All</div>
<svg style="left:1799px;top:213px" width="23" height="19" viewBox="0 0 23 19">
<defs><pattern id="dp1799" width="2" height="2" patternUnits="userSpaceOnUse"><rect width="2" height="2" fill="#b9c8e6"/><rect width="1" height="1" fill="#7d93c6"/></pattern></defs>
<rect x="0" y="0" width="23" height="19" fill="url(#dp1799)"/>
<rect x="0.5" y="0.5" width="22" height="18" fill="none" stroke="#8da1cf" stroke-width="1"/>
<g fill="#6781bb"><rect x="3" y="3" width="3" height="3"/><rect x="7" y="3" width="3" height="3"/><rect x="3" y="7" width="3" height="3"/><rect x="7" y="7" width="2.5" height="3"/><rect x="3" y="11" width="3" height="3"/><rect x="11" y="3" width="2" height="2"/></g>
<circle cx="14.6" cy="10.4" r="4.6" fill="#e4ecf9" stroke="#b5c3e0" stroke-width="0.8"/><path d="M12.2 10.4 H17 " stroke="#34425e" stroke-width="1.2"/></svg>
<div class="t " style="left:1827.5px;top:216.0px;font-size:12px;line-height:16px;font-weight:normal;color:#b3bdd3;letter-spacing:0.191px;text-shadow:1px 1px 0 #f6f8fd;">Collapse All</div>
<div style="position:absolute;left:1071px;top:258px;width:837px;height:26px;background:#fff;border-top:1px solid #9a9a9a;border-bottom:1px solid #b8bcc8;box-sizing:border-box;"></div>
<div class="t " style="left:1077px;top:264.5px;font-size:12px;line-height:16px;font-weight:normal;color:#111;letter-spacing:2.312px;">#</div>
<div style="position:absolute;left:1099px;top:259px;width:1px;height:25px;background:#a9a9a9;"></div>
<div class="t " style="left:1105px;top:264.5px;font-size:12px;line-height:16px;font-weight:normal;color:#111;letter-spacing:-0.031px;">Well</div>
<div style="position:absolute;left:1174px;top:259px;width:1px;height:25px;background:#a9a9a9;"></div>
<div class="t " style="left:1180px;top:264.5px;font-size:12px;line-height:16px;font-weight:normal;color:#111;letter-spacing:0.414px;">Omit</div>
<div style="position:absolute;left:1249px;top:259px;width:1px;height:25px;background:#a9a9a9;"></div>
<div class="t " style="left:1255px;top:264.5px;font-size:12px;line-height:16px;font-weight:normal;color:#111;letter-spacing:0.164px;">Flag</div>
<div style="position:absolute;left:1324px;top:259px;width:1px;height:25px;background:#a9a9a9;"></div>
<div class="t " style="left:1330px;top:264.5px;font-size:12px;line-height:16px;font-weight:normal;color:#111;letter-spacing:-0.064px;">Sample N...</div>
<div style="position:absolute;left:1399px;top:259px;width:1px;height:25px;background:#a9a9a9;"></div>
<div class="t " style="left:1405px;top:264.5px;font-size:12px;line-height:16px;font-weight:normal;color:#111;letter-spacing:0.081px;">Target Na...</div>
<div style="position:absolute;left:1474px;top:259px;width:1px;height:25px;background:#a9a9a9;"></div>
<div class="t " style="left:1480px;top:264.5px;font-size:12px;line-height:16px;font-weight:normal;color:#111;letter-spacing:0.000px;">Ct</div>
<div style="position:absolute;left:1549px;top:259px;width:1px;height:25px;background:#a9a9a9;"></div>
<div class="t " style="left:1555px;top:264.5px;font-size:12px;line-height:16px;font-weight:normal;color:#111;letter-spacing:0.578px;">Task</div>
<div style="position:absolute;left:1624px;top:259px;width:1px;height:25px;background:#a9a9a9;"></div>
<div class="t " style="left:1630px;top:264.5px;font-size:12px;line-height:16px;font-weight:normal;color:#111;letter-spacing:0.164px;">Dyes</div>
<div style="position:absolute;left:1699px;top:259px;width:1px;height:25px;background:#a9a9a9;"></div>
<div class="t " style="left:1705px;top:264.5px;font-size:12px;line-height:16px;font-weight:normal;color:#111;letter-spacing:0.214px;">ΔRn</div>
<div style="position:absolute;left:1774px;top:259px;width:1px;height:25px;background:#a9a9a9;"></div>
<div class="t " style="left:1780px;top:264.5px;font-size:12px;line-height:16px;font-weight:normal;color:#111;letter-spacing:-0.090px;">ΔRn Mean</div>
<div style="position:absolute;left:1849px;top:259px;width:1px;height:25px;background:#a9a9a9;"></div>
<div class="t " style="left:1855px;top:264.5px;font-size:12px;line-height:16px;font-weight:normal;color:#111;letter-spacing:0.059px;">ΔRn S</div>
<div style="position:absolute;left:1892px;top:259px;width:16px;height:24px;background:#fff;"></div>
<div style="position:absolute;left:1907px;top:258px;width:1px;height:26px;background:#a9a9a9;"></div>
<div class="abs" style="left:1071px;top:284px;width:837px;height:661px;overflow:hidden;">
<div style="position:absolute;left:0px;top:-5px;width:29px;height:18px;background:linear-gradient(90deg,#a7b3cf 0%,#b3bed8 45%,#c7cfe2 100%);"></div>
<div style="position:absolute;left:29px;top:-5px;width:790px;height:18px;background:#dbe1ee;"></div>
<div class="t" style="left:0;width:27.5px;text-align:right;top:-3.0px;font-size:12px;line-height:16px;color:#111;">61</div>
<div class="t " style="left:49px;top:-3.0px;font-size:12px;line-height:16px;font-weight:normal;color:#111;">D7</div>
<div class="cb" style="left:135px;top:-2px;width:11px;height:11px;"></div>
<div class="t " style="left:320px;top:-3.0px;font-size:12px;line-height:16px;font-weight:normal;color:#111;">...</div>
<div class="t " style="left:330px;top:-3.0px;font-size:12px;line-height:16px;font-weight:normal;color:#111;letter-spacing:0.026px;">Mykoplasm...</div>
<div class="t " style="left:405px;top:-3.0px;font-size:12px;line-height:16px;font-weight:normal;color:#111;letter-spacing:0.160px;">45.0</div>
<div class="t " style="left:480px;top:-3.0px;font-size:12px;line-height:16px;font-weight:normal;color:#111;letter-spacing:0.096px;">UNKNOWN</div>
<div class="t " style="left:555px;top:-3.0px;font-size:12px;line-height:16px;font-weight:normal;color:#111;letter-spacing:-0.045px;">FAM-None</div>
<div style="position:absolute;left:0px;top:13px;width:29px;height:18px;background:linear-gradient(90deg,#a7b3cf 0%,#b3bed8 45%,#c7cfe2 100%);"></div>
<div style="position:absolute;left:29px;top:13px;width:790px;height:18px;background:#fff;"></div>
<div class="t" style="left:0;width:27.5px;text-align:right;top:15.0px;font-size:12px;line-height:16px;color:#111;">62</div>
<div class="t " style="left:49px;top:15.0px;font-size:12px;line-height:16px;font-weight:normal;color:#111;">D7</div>
<div class="cb" style="left:135px;top:16px;width:11px;height:11px;"></div>
<div class="t " style="left:320px;top:15.0px;font-size:12px;line-height:16px;font-weight:normal;color:#111;">...</div>
<div class="t " style="left:330px;top:15.0px;font-size:12px;line-height:16px;font-weight:normal;color:#111;letter-spacing:0.053px;">PCR-Kontr...</div>
<div class="t " style="left:405px;top:15.0px;font-size:12px;line-height:16px;font-weight:normal;color:#111;letter-spacing:0.160px;">45.0</div>
<div class="t " style="left:480px;top:15.0px;font-size:12px;line-height:16px;font-weight:normal;color:#111;letter-spacing:0.096px;">UNKNOWN</div>
<div class="t " style="left:555px;top:15.0px;font-size:12px;line-height:16px;font-weight:normal;color:#111;letter-spacing:-0.086px;">ROX-None</div>
<div style="position:absolute;left:0px;top:31px;width:29px;height:18px;background:linear-gradient(90deg,#a7b3cf 0%,#b3bed8 45%,#c7cfe2 100%);"></div>
<div style="position:absolute;left:29px;top:31px;width:790px;height:18px;background:#dbe1ee;"></div>
<div class="t" style="left:0;width:27.5px;text-align:right;top:33.0px;font-size:12px;line-height:16px;color:#111;">63</div>
<div class="t " style="left:49px;top:33.0px;font-size:12px;line-height:16px;font-weight:normal;color:#111;">D8</div>
<div class="cb" style="left:135px;top:34px;width:11px;height:11px;"></div>
<div class="t " style="left:320px;top:33.0px;font-size:12px;line-height:16px;font-weight:normal;color:#111;">...</div>
<div class="t " style="left:330px;top:33.0px;font-size:12px;line-height:16px;font-weight:normal;color:#111;letter-spacing:0.026px;">Mykoplasm...</div>
<div class="t " style="left:405px;top:33.0px;font-size:12px;line-height:16px;font-weight:normal;color:#111;letter-spacing:0.160px;">45.0</div>
<div class="t " style="left:480px;top:33.0px;font-size:12px;line-height:16px;font-weight:normal;color:#111;letter-spacing:0.096px;">UNKNOWN</div>
<div class="t " style="left:555px;top:33.0px;font-size:12px;line-height:16px;font-weight:normal;color:#111;letter-spacing:-0.045px;">FAM-None</div>
<div style="position:absolute;left:0px;top:49px;width:29px;height:18px;background:linear-gradient(90deg,#a7b3cf 0%,#b3bed8 45%,#c7cfe2 100%);"></div>
<div style="position:absolute;left:29px;top:49px;width:790px;height:18px;background:#fff;"></div>
<div class="t" style="left:0;width:27.5px;text-align:right;top:51.0px;font-size:12px;line-height:16px;color:#111;">64</div>
<div class="t " style="left:49px;top:51.0px;font-size:12px;line-height:16px;font-weight:normal;color:#111;">D8</div>
<div class="cb" style="left:135px;top:52px;width:11px;height:11px;"></div>
<div class="t " style="left:320px;top:51.0px;font-size:12px;line-height:16px;font-weight:normal;color:#111;">...</div>
<div class="t " style="left:330px;top:51.0px;font-size:12px;line-height:16px;font-weight:normal;color:#111;letter-spacing:0.053px;">PCR-Kontr...</div>
<div class="t " style="left:405px;top:51.0px;font-size:12px;line-height:16px;font-weight:normal;color:#111;letter-spacing:0.252px;">17.213097</div>
<div class="t " style="left:480px;top:51.0px;font-size:12px;line-height:16px;font-weight:normal;color:#111;letter-spacing:0.096px;">UNKNOWN</div>
<div class="t " style="left:555px;top:51.0px;font-size:12px;line-height:16px;font-weight:normal;color:#111;letter-spacing:-0.086px;">ROX-None</div>
<div style="position:absolute;left:0px;top:67px;width:29px;height:18px;background:linear-gradient(90deg,#a7b3cf 0%,#b3bed8 45%,#c7cfe2 100%);"></div>
<div style="position:absolute;left:29px;top:67px;width:790px;height:18px;background:#b9cdf9;"></div>
<div class="t" style="left:0;width:27.5px;text-align:right;top:69.0px;font-size:12px;line-height:16px;color:#111;">65</div>
<div class="t " style="left:49px;top:69.0px;font-size:12px;line-height:16px;font-weight:normal;color:#111;">E1</div>
<div class="cb" style="left:135px;top:70px;width:11px;height:11px;"></div>
<div class="t " style="left:255px;top:69.0px;font-size:12px;line-height:16px;font-weight:normal;color:#111;letter-spacing:0.164px;">NK</div>
<div class="t " style="left:330px;top:69.0px;font-size:12px;line-height:16px;font-weight:normal;color:#111;letter-spacing:0.026px;">Mykoplasm...</div>
<div class="t " style="left:405px;top:69.0px;font-size:12px;line-height:16px;font-weight:normal;color:#111;letter-spacing:0.160px;">45.0</div>
<div class="t " style="left:480px;top:69.0px;font-size:12px;line-height:16px;font-weight:normal;color:#111;letter-spacing:0.096px;">UNKNOWN</div>
<div class="t " style="left:555px;top:69.0px;font-size:12px;line-height:16px;font-weight:normal;color:#111;letter-spacing:-0.045px;">FAM-None</div>
<div style="position:absolute;left:0px;top:85px;width:29px;height:18px;background:linear-gradient(90deg,#a7b3cf 0%,#b3bed8 45%,#c7cfe2 100%);"></div>
<div style="position:absolute;left:29px;top:85px;width:790px;height:18px;background:#b9cdf9;"></div>
<div class="t" style="left:0;width:27.5px;text-align:right;top:87.0px;font-size:12px;line-height:16px;color:#111;">66</div>
<div class="t " style="left:49px;top:87.0px;font-size:12px;line-height:16px;font-weight:normal;color:#111;">E1</div>
<div class="cb" style="left:135px;top:88px;width:11px;height:11px;"></div>
<div class="t " style="left:255px;top:87.0px;font-size:12px;line-height:16px;font-weight:normal;color:#111;letter-spacing:0.164px;">NK</div>
<div class="t " style="left:330px;top:87.0px;font-size:12px;line-height:16px;font-weight:normal;color:#111;letter-spacing:0.053px;">PCR-Kontr...</div>
<div class="t " style="left:405px;top:87.0px;font-size:12px;line-height:16px;font-weight:normal;color:#111;letter-spacing:0.252px;">12.327925</div>
<div class="t " style="left:480px;top:87.0px;font-size:12px;line-height:16px;font-weight:normal;color:#111;letter-spacing:0.096px;">UNKNOWN</div>
<div class="t " style="left:555px;top:87.0px;font-size:12px;line-height:16px;font-weight:normal;color:#111;letter-spacing:-0.086px;">ROX-None</div>
<div style="position:absolute;left:0px;top:103px;width:29px;height:18px;background:linear-gradient(90deg,#a7b3cf 0%,#b3bed8 45%,#c7cfe2 100%);"></div>
<div style="position:absolute;left:29px;top:103px;width:790px;height:18px;background:#b9cdf9;"></div>
<div class="t" style="left:0;width:27.5px;text-align:right;top:105.0px;font-size:12px;line-height:16px;color:#111;">67</div>
<div class="t " style="left:49px;top:105.0px;font-size:12px;line-height:16px;font-weight:normal;color:#111;">E2</div>
<div class="cb" style="left:135px;top:106px;width:11px;height:11px;"></div>
<div class="t " style="left:255px;top:105.0px;font-size:12px;line-height:16px;font-weight:normal;color:#111;letter-spacing:0.164px;">NK</div>
<div class="t " style="left:330px;top:105.0px;font-size:12px;line-height:16px;font-weight:normal;color:#111;letter-spacing:0.026px;">Mykoplasm...</div>
<div class="t " style="left:405px;top:105.0px;font-size:12px;line-height:16px;font-weight:normal;color:#111;letter-spacing:0.160px;">45.0</div>
<div class="t " style="left:480px;top:105.0px;font-size:12px;line-height:16px;font-weight:normal;color:#111;letter-spacing:0.096px;">UNKNOWN</div>
<div class="t " style="left:555px;top:105.0px;font-size:12px;line-height:16px;font-weight:normal;color:#111;letter-spacing:-0.045px;">FAM-None</div>
<div style="position:absolute;left:0px;top:121px;width:29px;height:18px;background:linear-gradient(90deg,#a7b3cf 0%,#b3bed8 45%,#c7cfe2 100%);"></div>
<div style="position:absolute;left:29px;top:121px;width:790px;height:18px;background:#b9cdf9;"></div>
<div class="t" style="left:0;width:27.5px;text-align:right;top:123.0px;font-size:12px;line-height:16px;color:#111;">68</div>
<div class="t " style="left:49px;top:123.0px;font-size:12px;line-height:16px;font-weight:normal;color:#111;">E2</div>
<div class="cb" style="left:135px;top:124px;width:11px;height:11px;"></div>
<div class="t " style="left:255px;top:123.0px;font-size:12px;line-height:16px;font-weight:normal;color:#111;letter-spacing:0.164px;">NK</div>
<div class="t " style="left:330px;top:123.0px;font-size:12px;line-height:16px;font-weight:normal;color:#111;letter-spacing:0.053px;">PCR-Kontr...</div>
<div class="t " style="left:405px;top:123.0px;font-size:12px;line-height:16px;font-weight:normal;color:#111;letter-spacing:0.252px;">15.371644</div>
<div class="t " style="left:480px;top:123.0px;font-size:12px;line-height:16px;font-weight:normal;color:#111;letter-spacing:0.096px;">UNKNOWN</div>
<div class="t " style="left:555px;top:123.0px;font-size:12px;line-height:16px;font-weight:normal;color:#111;letter-spacing:-0.086px;">ROX-None</div>
<div style="position:absolute;left:0px;top:139px;width:29px;height:18px;background:linear-gradient(90deg,#a7b3cf 0%,#b3bed8 45%,#c7cfe2 100%);"></div>
<div style="position:absolute;left:29px;top:139px;width:790px;height:18px;background:#dbe1ee;"></div>
<div class="t" style="left:0;width:27.5px;text-align:right;top:141.0px;font-size:12px;line-height:16px;color:#111;">69</div>
<div class="t " style="left:49px;top:141.0px;font-size:12px;line-height:16px;font-weight:normal;color:#111;">E3</div>
<div class="cb" style="left:135px;top:142px;width:11px;height:11px;"></div>
<div class="t " style="left:324.29999999999995px;top:141.0px;font-size:12px;line-height:16px;font-weight:normal;color:#111;">.</div>
<div class="t " style="left:330px;top:141.0px;font-size:12px;line-height:16px;font-weight:normal;color:#111;letter-spacing:0.026px;">Mykoplasm...</div>
<div class="t " style="left:405px;top:141.0px;font-size:12px;line-height:16px;font-weight:normal;color:#111;letter-spacing:0.160px;">45.0</div>
<div class="t " style="left:480px;top:141.0px;font-size:12px;line-height:16px;font-weight:normal;color:#111;letter-spacing:0.096px;">UNKNOWN</div>
<div class="t " style="left:555px;top:141.0px;font-size:12px;line-height:16px;font-weight:normal;color:#111;letter-spacing:-0.045px;">FAM-None</div>
<div style="position:absolute;left:0px;top:157px;width:29px;height:18px;background:linear-gradient(90deg,#a7b3cf 0%,#b3bed8 45%,#c7cfe2 100%);"></div>
<div style="position:absolute;left:29px;top:157px;width:790px;height:18px;background:#fff;"></div>
<div class="t" style="left:0;width:27.5px;text-align:right;top:159.0px;font-size:12px;line-height:16px;color:#111;">70</div>
<div class="t " style="left:49px;top:159.0px;font-size:12px;line-height:16px;font-weight:normal;color:#111;">E3</div>
<div class="cb" style="left:135px;top:160px;width:11px;height:11px;"></div>
<div class="t " style="left:324.29999999999995px;top:159.0px;font-size:12px;line-height:16px;font-weight:normal;color:#111;">.</div>
<div class="t " style="left:330px;top:159.0px;font-size:12px;line-height:16px;font-weight:normal;color:#111;letter-spacing:0.053px;">PCR-Kontr...</div>
<div class="t " style="left:405px;top:159.0px;font-size:12px;line-height:16px;font-weight:normal;color:#111;letter-spacing:0.351px;">14.774211</div>
<div class="t " style="left:480px;top:159.0px;font-size:12px;line-height:16px;font-weight:normal;color:#111;letter-spacing:0.096px;">UNKNOWN</div>
<div class="t " style="left:555px;top:159.0px;font-size:12px;line-height:16px;font-weight:normal;color:#111;letter-spacing:-0.086px;">ROX-None</div>
<div style="position:absolute;left:0px;top:175px;width:29px;height:18px;background:linear-gradient(90deg,#a7b3cf 0%,#b3bed8 45%,#c7cfe2 100%);"></div>
<div style="position:absolute;left:29px;top:175px;width:790px;height:18px;background:#dbe1ee;"></div>
<div class="t" style="left:0;width:27.5px;text-align:right;top:177.0px;font-size:12px;line-height:16px;color:#111;">71</div>
<div class="t " style="left:49px;top:177.0px;font-size:12px;line-height:16px;font-weight:normal;color:#111;">E4</div>
<div class="cb" style="left:135px;top:178px;width:11px;height:11px;"></div>
<div class="t " style="left:324.29999999999995px;top:177.0px;font-size:12px;line-height:16px;font-weight:normal;color:#111;">.</div>
<div class="t " style="left:330px;top:177.0px;font-size:12px;line-height:16px;font-weight:normal;color:#111;letter-spacing:0.026px;">Mykoplasm...</div>
<div class="t " style="left:405px;top:177.0px;font-size:12px;line-height:16px;font-weight:normal;color:#111;letter-spacing:0.160px;">45.0</div>
<div class="t " style="left:480px;top:177.0px;font-size:12px;line-height:16px;font-weight:normal;color:#111;letter-spacing:0.096px;">UNKNOWN</div>
<div class="t " style="left:555px;top:177.0px;font-size:12px;line-height:16px;font-weight:normal;color:#111;letter-spacing:-0.045px;">FAM-None</div>
<div style="position:absolute;left:0px;top:193px;width:29px;height:18px;background:linear-gradient(90deg,#a7b3cf 0%,#b3bed8 45%,#c7cfe2 100%);"></div>
<div style="position:absolute;left:29px;top:193px;width:790px;height:18px;background:#fff;"></div>
<div class="t" style="left:0;width:27.5px;text-align:right;top:195.0px;font-size:12px;line-height:16px;color:#111;">72</div>
<div class="t " style="left:49px;top:195.0px;font-size:12px;line-height:16px;font-weight:normal;color:#111;">E4</div>
<div class="cb" style="left:135px;top:196px;width:11px;height:11px;"></div>
<div class="t " style="left:324.29999999999995px;top:195.0px;font-size:12px;line-height:16px;font-weight:normal;color:#111;">.</div>
<div class="t " style="left:330px;top:195.0px;font-size:12px;line-height:16px;font-weight:normal;color:#111;letter-spacing:0.053px;">PCR-Kontr...</div>
<div class="t " style="left:405px;top:195.0px;font-size:12px;line-height:16px;font-weight:normal;color:#111;letter-spacing:0.252px;">10.413968</div>
<div class="t " style="left:480px;top:195.0px;font-size:12px;line-height:16px;font-weight:normal;color:#111;letter-spacing:0.096px;">UNKNOWN</div>
<div class="t " style="left:555px;top:195.0px;font-size:12px;line-height:16px;font-weight:normal;color:#111;letter-spacing:-0.086px;">ROX-None</div>
<div style="position:absolute;left:0px;top:211px;width:29px;height:18px;background:linear-gradient(90deg,#a7b3cf 0%,#b3bed8 45%,#c7cfe2 100%);"></div>
<div style="position:absolute;left:29px;top:211px;width:790px;height:18px;background:#dbe1ee;"></div>
<div class="t" style="left:0;width:27.5px;text-align:right;top:213.0px;font-size:12px;line-height:16px;color:#111;">73</div>
<div class="t " style="left:49px;top:213.0px;font-size:12px;line-height:16px;font-weight:normal;color:#111;">E5</div>
<div class="cb" style="left:135px;top:214px;width:11px;height:11px;"></div>
<div class="t " style="left:324.29999999999995px;top:213.0px;font-size:12px;line-height:16px;font-weight:normal;color:#111;">.</div>
<div class="t " style="left:330px;top:213.0px;font-size:12px;line-height:16px;font-weight:normal;color:#111;letter-spacing:0.026px;">Mykoplasm...</div>
<div class="t " style="left:405px;top:213.0px;font-size:12px;line-height:16px;font-weight:normal;color:#111;letter-spacing:0.160px;">45.0</div>
<div class="t " style="left:480px;top:213.0px;font-size:12px;line-height:16px;font-weight:normal;color:#111;letter-spacing:0.096px;">UNKNOWN</div>
<div class="t " style="left:555px;top:213.0px;font-size:12px;line-height:16px;font-weight:normal;color:#111;letter-spacing:-0.045px;">FAM-None</div>
<div style="position:absolute;left:0px;top:229px;width:29px;height:18px;background:linear-gradient(90deg,#a7b3cf 0%,#b3bed8 45%,#c7cfe2 100%);"></div>
<div style="position:absolute;left:29px;top:229px;width:790px;height:18px;background:#fff;"></div>
<div class="t" style="left:0;width:27.5px;text-align:right;top:231.0px;font-size:12px;line-height:16px;color:#111;">74</div>
<div class="t " style="left:49px;top:231.0px;font-size:12px;line-height:16px;font-weight:normal;color:#111;">E5</div>
<div class="cb" style="left:135px;top:232px;width:11px;height:11px;"></div>
<div class="t " style="left:324.29999999999995px;top:231.0px;font-size:12px;line-height:16px;font-weight:normal;color:#111;">.</div>
<div class="t " style="left:330px;top:231.0px;font-size:12px;line-height:16px;font-weight:normal;color:#111;letter-spacing:0.053px;">PCR-Kontr...</div>
<div class="t " style="left:405px;top:231.0px;font-size:12px;line-height:16px;font-weight:normal;color:#111;letter-spacing:0.160px;">45.0</div>
<div class="t " style="left:480px;top:231.0px;font-size:12px;line-height:16px;font-weight:normal;color:#111;letter-spacing:0.096px;">UNKNOWN</div>
<div class="t " style="left:555px;top:231.0px;font-size:12px;line-height:16px;font-weight:normal;color:#111;letter-spacing:-0.086px;">ROX-None</div>
<div style="position:absolute;left:0px;top:247px;width:29px;height:18px;background:linear-gradient(90deg,#a7b3cf 0%,#b3bed8 45%,#c7cfe2 100%);"></div>
<div style="position:absolute;left:29px;top:247px;width:790px;height:18px;background:#dbe1ee;"></div>
<div class="t" style="left:0;width:27.5px;text-align:right;top:249.0px;font-size:12px;line-height:16px;color:#111;">75</div>
<div class="t " style="left:49px;top:249.0px;font-size:12px;line-height:16px;font-weight:normal;color:#111;">E6</div>
<div class="cb" style="left:135px;top:250px;width:11px;height:11px;"></div>
<div class="t " style="left:324.29999999999995px;top:249.0px;font-size:12px;line-height:16px;font-weight:normal;color:#111;">.</div>
<div class="t " style="left:330px;top:249.0px;font-size:12px;line-height:16px;font-weight:normal;color:#111;letter-spacing:0.026px;">Mykoplasm...</div>
<div class="t " style="left:405px;top:249.0px;font-size:12px;line-height:16px;font-weight:normal;color:#111;letter-spacing:0.160px;">45.0</div>
<div class="t " style="left:480px;top:249.0px;font-size:12px;line-height:16px;font-weight:normal;color:#111;letter-spacing:0.096px;">UNKNOWN</div>
<div class="t " style="left:555px;top:249.0px;font-size:12px;line-height:16px;font-weight:normal;color:#111;letter-spacing:-0.045px;">FAM-None</div>
<div style="position:absolute;left:0px;top:265px;width:29px;height:18px;background:linear-gradient(90deg,#a7b3cf 0%,#b3bed8 45%,#c7cfe2 100%);"></div>
<div style="position:absolute;left:29px;top:265px;width:790px;height:18px;background:#fff;"></div>
<div class="t" style="left:0;width:27.5px;text-align:right;top:267.0px;font-size:12px;line-height:16px;color:#111;">76</div>
<div class="t " style="left:49px;top:267.0px;font-size:12px;line-height:16px;font-weight:normal;color:#111;">E6</div>
<div class="cb" style="left:135px;top:268px;width:11px;height:11px;"></div>
<div class="t " style="left:324.29999999999995px;top:267.0px;font-size:12px;line-height:16px;font-weight:normal;color:#111;">.</div>
<div class="t " style="left:330px;top:267.0px;font-size:12px;line-height:16px;font-weight:normal;color:#111;letter-spacing:0.053px;">PCR-Kontr...</div>
<div class="t " style="left:405px;top:267.0px;font-size:12px;line-height:16px;font-weight:normal;color:#111;letter-spacing:0.160px;">45.0</div>
<div class="t " style="left:480px;top:267.0px;font-size:12px;line-height:16px;font-weight:normal;color:#111;letter-spacing:0.096px;">UNKNOWN</div>
<div class="t " style="left:555px;top:267.0px;font-size:12px;line-height:16px;font-weight:normal;color:#111;letter-spacing:-0.086px;">ROX-None</div>
<div style="position:absolute;left:0px;top:283px;width:29px;height:18px;background:linear-gradient(90deg,#a7b3cf 0%,#b3bed8 45%,#c7cfe2 100%);"></div>
<div style="position:absolute;left:29px;top:283px;width:790px;height:18px;background:#dbe1ee;"></div>
<div class="t" style="left:0;width:27.5px;text-align:right;top:285.0px;font-size:12px;line-height:16px;color:#111;">77</div>
<div class="t " style="left:49px;top:285.0px;font-size:12px;line-height:16px;font-weight:normal;color:#111;">E7</div>
<div class="cb" style="left:135px;top:286px;width:11px;height:11px;"></div>
<div class="t " style="left:324.29999999999995px;top:285.0px;font-size:12px;line-height:16px;font-weight:normal;color:#111;">.</div>
<div class="t " style="left:330px;top:285.0px;font-size:12px;line-height:16px;font-weight:normal;color:#111;letter-spacing:0.026px;">Mykoplasm...</div>
<div class="t " style="left:405px;top:285.0px;font-size:12px;line-height:16px;font-weight:normal;color:#111;letter-spacing:0.160px;">45.0</div>
<div class="t " style="left:480px;top:285.0px;font-size:12px;line-height:16px;font-weight:normal;color:#111;letter-spacing:0.096px;">UNKNOWN</div>
<div class="t " style="left:555px;top:285.0px;font-size:12px;line-height:16px;font-weight:normal;color:#111;letter-spacing:-0.045px;">FAM-None</div>
<div style="position:absolute;left:0px;top:301px;width:29px;height:18px;background:linear-gradient(90deg,#a7b3cf 0%,#b3bed8 45%,#c7cfe2 100%);"></div>
<div style="position:absolute;left:29px;top:301px;width:790px;height:18px;background:#fff;"></div>
<div class="t" style="left:0;width:27.5px;text-align:right;top:303.0px;font-size:12px;line-height:16px;color:#111;">78</div>
<div class="t " style="left:49px;top:303.0px;font-size:12px;line-height:16px;font-weight:normal;color:#111;">E7</div>
<div class="cb" style="left:135px;top:304px;width:11px;height:11px;"></div>
<div class="t " style="left:324.29999999999995px;top:303.0px;font-size:12px;line-height:16px;font-weight:normal;color:#111;">.</div>
<div class="t " style="left:330px;top:303.0px;font-size:12px;line-height:16px;font-weight:normal;color:#111;letter-spacing:0.053px;">PCR-Kontr...</div>
<div class="t " style="left:405px;top:303.0px;font-size:12px;line-height:16px;font-weight:normal;color:#111;letter-spacing:0.160px;">45.0</div>
<div class="t " style="left:480px;top:303.0px;font-size:12px;line-height:16px;font-weight:normal;color:#111;letter-spacing:0.096px;">UNKNOWN</div>
<div class="t " style="left:555px;top:303.0px;font-size:12px;line-height:16px;font-weight:normal;color:#111;letter-spacing:-0.086px;">ROX-None</div>
<div style="position:absolute;left:0px;top:319px;width:29px;height:18px;background:linear-gradient(90deg,#a7b3cf 0%,#b3bed8 45%,#c7cfe2 100%);"></div>
<div style="position:absolute;left:29px;top:319px;width:790px;height:18px;background:#dbe1ee;"></div>
<div class="t" style="left:0;width:27.5px;text-align:right;top:321.0px;font-size:12px;line-height:16px;color:#111;">79</div>
<div class="t " style="left:49px;top:321.0px;font-size:12px;line-height:16px;font-weight:normal;color:#111;">E8</div>
<div class="cb" style="left:135px;top:322px;width:11px;height:11px;"></div>
<div class="t " style="left:324.29999999999995px;top:321.0px;font-size:12px;line-height:16px;font-weight:normal;color:#111;">.</div>
<div class="t " style="left:330px;top:321.0px;font-size:12px;line-height:16px;font-weight:normal;color:#111;letter-spacing:0.026px;">Mykoplasm...</div>
<div class="t " style="left:405px;top:321.0px;font-size:12px;line-height:16px;font-weight:normal;color:#111;letter-spacing:0.160px;">45.0</div>
<div class="t " style="left:480px;top:321.0px;font-size:12px;line-height:16px;font-weight:normal;color:#111;letter-spacing:0.096px;">UNKNOWN</div>
<div class="t " style="left:555px;top:321.0px;font-size:12px;line-height:16px;font-weight:normal;color:#111;letter-spacing:-0.045px;">FAM-None</div>
<div style="position:absolute;left:0px;top:337px;width:29px;height:18px;background:linear-gradient(90deg,#a7b3cf 0%,#b3bed8 45%,#c7cfe2 100%);"></div>
<div style="position:absolute;left:29px;top:337px;width:790px;height:18px;background:#fff;"></div>
<div class="t" style="left:0;width:27.5px;text-align:right;top:339.0px;font-size:12px;line-height:16px;color:#111;">80</div>
<div class="t " style="left:49px;top:339.0px;font-size:12px;line-height:16px;font-weight:normal;color:#111;">E8</div>
<div class="cb" style="left:135px;top:340px;width:11px;height:11px;"></div>
<div class="t " style="left:324.29999999999995px;top:339.0px;font-size:12px;line-height:16px;font-weight:normal;color:#111;">.</div>
<div class="t " style="left:330px;top:339.0px;font-size:12px;line-height:16px;font-weight:normal;color:#111;letter-spacing:0.053px;">PCR-Kontr...</div>
<div class="t " style="left:405px;top:339.0px;font-size:12px;line-height:16px;font-weight:normal;color:#111;letter-spacing:0.252px;">13.578829</div>
<div class="t " style="left:480px;top:339.0px;font-size:12px;line-height:16px;font-weight:normal;color:#111;letter-spacing:0.096px;">UNKNOWN</div>
<div class="t " style="left:555px;top:339.0px;font-size:12px;line-height:16px;font-weight:normal;color:#111;letter-spacing:-0.086px;">ROX-None</div>
<div style="position:absolute;left:0px;top:355px;width:29px;height:18px;background:linear-gradient(90deg,#a7b3cf 0%,#b3bed8 45%,#c7cfe2 100%);"></div>
<div style="position:absolute;left:29px;top:355px;width:790px;height:18px;background:#b9cdf9;"></div>
<div class="t" style="left:0;width:27.5px;text-align:right;top:357.0px;font-size:12px;line-height:16px;color:#111;">81</div>
<div class="t " style="left:49px;top:357.0px;font-size:12px;line-height:16px;font-weight:normal;color:#111;">F1</div>
<div class="cb" style="left:135px;top:358px;width:11px;height:11px;"></div>
<div class="t " style="left:255px;top:357.0px;font-size:12px;line-height:16px;font-weight:normal;color:#111;letter-spacing:0.109px;">NTC</div>
<div class="t " style="left:330px;top:357.0px;font-size:12px;line-height:16px;font-weight:normal;color:#111;letter-spacing:0.026px;">Mykoplasm...</div>
<div class="t " style="left:405px;top:357.0px;font-size:12px;line-height:16px;font-weight:normal;color:#111;letter-spacing:0.160px;">45.0</div>
<div class="t " style="left:480px;top:357.0px;font-size:12px;line-height:16px;font-weight:normal;color:#111;letter-spacing:0.096px;">UNKNOWN</div>
<div class="t " style="left:555px;top:357.0px;font-size:12px;line-height:16px;font-weight:normal;color:#111;letter-spacing:-0.045px;">FAM-None</div>
<div style="position:absolute;left:0px;top:373px;width:29px;height:18px;background:linear-gradient(90deg,#a7b3cf 0%,#b3bed8 45%,#c7cfe2 100%);"></div>
<div style="position:absolute;left:29px;top:373px;width:790px;height:18px;background:#b9cdf9;"></div>
<div class="t" style="left:0;width:27.5px;text-align:right;top:375.0px;font-size:12px;line-height:16px;color:#111;">82</div>
<div class="t " style="left:49px;top:375.0px;font-size:12px;line-height:16px;font-weight:normal;color:#111;">F1</div>
<div class="cb" style="left:135px;top:376px;width:11px;height:11px;"></div>
<div class="t " style="left:255px;top:375.0px;font-size:12px;line-height:16px;font-weight:normal;color:#111;letter-spacing:0.109px;">NTC</div>
<div class="t " style="left:330px;top:375.0px;font-size:12px;line-height:16px;font-weight:normal;color:#111;letter-spacing:0.053px;">PCR-Kontr...</div>
<div class="t " style="left:405px;top:375.0px;font-size:12px;line-height:16px;font-weight:normal;color:#111;letter-spacing:0.160px;">45.0</div>
<div class="t " style="left:480px;top:375.0px;font-size:12px;line-height:16px;font-weight:normal;color:#111;letter-spacing:0.096px;">UNKNOWN</div>
<div class="t " style="left:555px;top:375.0px;font-size:12px;line-height:16px;font-weight:normal;color:#111;letter-spacing:-0.086px;">ROX-None</div>
<div style="position:absolute;left:0px;top:391px;width:29px;height:18px;background:linear-gradient(90deg,#a7b3cf 0%,#b3bed8 45%,#c7cfe2 100%);"></div>
<div style="position:absolute;left:29px;top:391px;width:790px;height:18px;background:#b9cdf9;"></div>
<div class="t" style="left:0;width:27.5px;text-align:right;top:393.0px;font-size:12px;line-height:16px;color:#111;">83</div>
<div class="t " style="left:49px;top:393.0px;font-size:12px;line-height:16px;font-weight:normal;color:#111;">F2</div>
<div class="cb" style="left:135px;top:394px;width:11px;height:11px;"></div>
<div class="t " style="left:255px;top:393.0px;font-size:12px;line-height:16px;font-weight:normal;color:#111;letter-spacing:0.109px;">NTC</div>
<div class="t " style="left:330px;top:393.0px;font-size:12px;line-height:16px;font-weight:normal;color:#111;letter-spacing:0.026px;">Mykoplasm...</div>
<div class="t " style="left:405px;top:393.0px;font-size:12px;line-height:16px;font-weight:normal;color:#111;letter-spacing:0.160px;">45.0</div>
<div class="t " style="left:480px;top:393.0px;font-size:12px;line-height:16px;font-weight:normal;color:#111;letter-spacing:0.096px;">UNKNOWN</div>
<div class="t " style="left:555px;top:393.0px;font-size:12px;line-height:16px;font-weight:normal;color:#111;letter-spacing:-0.045px;">FAM-None</div>
<div style="position:absolute;left:0px;top:409px;width:29px;height:18px;background:linear-gradient(90deg,#a7b3cf 0%,#b3bed8 45%,#c7cfe2 100%);"></div>
<div style="position:absolute;left:29px;top:409px;width:790px;height:18px;background:#b9cdf9;"></div>
<div class="t" style="left:0;width:27.5px;text-align:right;top:411.0px;font-size:12px;line-height:16px;color:#111;">84</div>
<div class="t " style="left:49px;top:411.0px;font-size:12px;line-height:16px;font-weight:normal;color:#111;">F2</div>
<div class="cb" style="left:135px;top:412px;width:11px;height:11px;"></div>
<div class="t " style="left:255px;top:411.0px;font-size:12px;line-height:16px;font-weight:normal;color:#111;letter-spacing:0.109px;">NTC</div>
<div class="t " style="left:330px;top:411.0px;font-size:12px;line-height:16px;font-weight:normal;color:#111;letter-spacing:0.053px;">PCR-Kontr...</div>
<div class="t " style="left:405px;top:411.0px;font-size:12px;line-height:16px;font-weight:normal;color:#111;letter-spacing:0.252px;">18.100374</div>
<div class="t " style="left:480px;top:411.0px;font-size:12px;line-height:16px;font-weight:normal;color:#111;letter-spacing:0.096px;">UNKNOWN</div>
<div class="t " style="left:555px;top:411.0px;font-size:12px;line-height:16px;font-weight:normal;color:#111;letter-spacing:-0.086px;">ROX-None</div>
<div style="position:absolute;left:0px;top:427px;width:29px;height:18px;background:linear-gradient(90deg,#a7b3cf 0%,#b3bed8 45%,#c7cfe2 100%);"></div>
<div style="position:absolute;left:29px;top:427px;width:790px;height:18px;background:#dbe1ee;"></div>
<div class="t" style="left:0;width:27.5px;text-align:right;top:429.0px;font-size:12px;line-height:16px;color:#111;">85</div>
<div class="t " style="left:49px;top:429.0px;font-size:12px;line-height:16px;font-weight:normal;color:#111;">F3</div>
<div class="cb" style="left:135px;top:430px;width:11px;height:11px;"></div>
<div class="t " style="left:324.79999999999995px;top:429.0px;font-size:12px;line-height:16px;font-weight:normal;color:#111;">.</div>
<div class="t " style="left:330px;top:429.0px;font-size:12px;line-height:16px;font-weight:normal;color:#111;letter-spacing:0.026px;">Mykoplasm...</div>
<div class="t " style="left:405px;top:429.0px;font-size:12px;line-height:16px;font-weight:normal;color:#111;letter-spacing:0.252px;">38.573612</div>
<div class="t " style="left:480px;top:429.0px;font-size:12px;line-height:16px;font-weight:normal;color:#111;letter-spacing:0.096px;">UNKNOWN</div>
<div class="t " style="left:555px;top:429.0px;font-size:12px;line-height:16px;font-weight:normal;color:#111;letter-spacing:-0.045px;">FAM-None</div>
<div style="position:absolute;left:0px;top:445px;width:29px;height:18px;background:linear-gradient(90deg,#a7b3cf 0%,#b3bed8 45%,#c7cfe2 100%);"></div>
<div style="position:absolute;left:29px;top:445px;width:790px;height:18px;background:#fff;"></div>
<div class="t" style="left:0;width:27.5px;text-align:right;top:447.0px;font-size:12px;line-height:16px;color:#111;">86</div>
<div class="t " style="left:49px;top:447.0px;font-size:12px;line-height:16px;font-weight:normal;color:#111;">F3</div>
<div class="cb" style="left:135px;top:448px;width:11px;height:11px;"></div>
<div class="t " style="left:324.79999999999995px;top:447.0px;font-size:12px;line-height:16px;font-weight:normal;color:#111;">.</div>
<div class="t " style="left:330px;top:447.0px;font-size:12px;line-height:16px;font-weight:normal;color:#111;letter-spacing:0.053px;">PCR-Kontr...</div>
<div class="t " style="left:405px;top:447.0px;font-size:12px;line-height:16px;font-weight:normal;color:#111;letter-spacing:0.160px;">45.0</div>
<div class="t " style="left:480px;top:447.0px;font-size:12px;line-height:16px;font-weight:normal;color:#111;letter-spacing:0.096px;">UNKNOWN</div>
<div class="t " style="left:555px;top:447.0px;font-size:12px;line-height:16px;font-weight:normal;color:#111;letter-spacing:-0.086px;">ROX-None</div>
<div style="position:absolute;left:0px;top:463px;width:29px;height:18px;background:linear-gradient(90deg,#a7b3cf 0%,#b3bed8 45%,#c7cfe2 100%);"></div>
<div style="position:absolute;left:29px;top:463px;width:790px;height:18px;background:#dbe1ee;"></div>
<div class="t" style="left:0;width:27.5px;text-align:right;top:465.0px;font-size:12px;line-height:16px;color:#111;">87</div>
<div class="t " style="left:49px;top:465.0px;font-size:12px;line-height:16px;font-weight:normal;color:#111;">F4</div>
<div class="cb" style="left:135px;top:466px;width:11px;height:11px;"></div>
<div class="t " style="left:324.79999999999995px;top:465.0px;font-size:12px;line-height:16px;font-weight:normal;color:#111;">.</div>
<div class="t " style="left:330px;top:465.0px;font-size:12px;line-height:16px;font-weight:normal;color:#111;letter-spacing:0.026px;">Mykoplasm...</div>
<div class="t " style="left:405px;top:465.0px;font-size:12px;line-height:16px;font-weight:normal;color:#111;letter-spacing:0.160px;">45.0</div>
<div class="t " style="left:480px;top:465.0px;font-size:12px;line-height:16px;font-weight:normal;color:#111;letter-spacing:0.096px;">UNKNOWN</div>
<div class="t " style="left:555px;top:465.0px;font-size:12px;line-height:16px;font-weight:normal;color:#111;letter-spacing:-0.045px;">FAM-None</div>
<div style="position:absolute;left:0px;top:481px;width:29px;height:18px;background:linear-gradient(90deg,#a7b3cf 0%,#b3bed8 45%,#c7cfe2 100%);"></div>
<div style="position:absolute;left:29px;top:481px;width:790px;height:18px;background:#fff;"></div>
<div class="t" style="left:0;width:27.5px;text-align:right;top:483.0px;font-size:12px;line-height:16px;color:#111;">88</div>
<div class="t " style="left:49px;top:483.0px;font-size:12px;line-height:16px;font-weight:normal;color:#111;">F4</div>
<div class="cb" style="left:135px;top:484px;width:11px;height:11px;"></div>
<div class="t " style="left:324.79999999999995px;top:483.0px;font-size:12px;line-height:16px;font-weight:normal;color:#111;">.</div>
<div class="t " style="left:330px;top:483.0px;font-size:12px;line-height:16px;font-weight:normal;color:#111;letter-spacing:0.053px;">PCR-Kontr...</div>
<div class="t " style="left:405px;top:483.0px;font-size:12px;line-height:16px;font-weight:normal;color:#111;letter-spacing:0.160px;">45.0</div>
<div class="t " style="left:480px;top:483.0px;font-size:12px;line-height:16px;font-weight:normal;color:#111;letter-spacing:0.096px;">UNKNOWN</div>
<div class="t " style="left:555px;top:483.0px;font-size:12px;line-height:16px;font-weight:normal;color:#111;letter-spacing:-0.086px;">ROX-None</div>
<div style="position:absolute;left:0px;top:499px;width:29px;height:18px;background:linear-gradient(90deg,#a7b3cf 0%,#b3bed8 45%,#c7cfe2 100%);"></div>
<div style="position:absolute;left:29px;top:499px;width:790px;height:18px;background:#dbe1ee;"></div>
<div class="t" style="left:0;width:27.5px;text-align:right;top:501.0px;font-size:12px;line-height:16px;color:#111;">89</div>
<div class="t " style="left:49px;top:501.0px;font-size:12px;line-height:16px;font-weight:normal;color:#111;">F5</div>
<div class="cb" style="left:135px;top:502px;width:11px;height:11px;"></div>
<div class="t " style="left:324.79999999999995px;top:501.0px;font-size:12px;line-height:16px;font-weight:normal;color:#111;">.</div>
<div class="t " style="left:330px;top:501.0px;font-size:12px;line-height:16px;font-weight:normal;color:#111;letter-spacing:0.026px;">Mykoplasm...</div>
<div class="t " style="left:405px;top:501.0px;font-size:12px;line-height:16px;font-weight:normal;color:#111;letter-spacing:0.160px;">45.0</div>
<div class="t " style="left:480px;top:501.0px;font-size:12px;line-height:16px;font-weight:normal;color:#111;letter-spacing:0.096px;">UNKNOWN</div>
<div class="t " style="left:555px;top:501.0px;font-size:12px;line-height:16px;font-weight:normal;color:#111;letter-spacing:-0.045px;">FAM-None</div>
<div style="position:absolute;left:0px;top:517px;width:29px;height:18px;background:linear-gradient(90deg,#a7b3cf 0%,#b3bed8 45%,#c7cfe2 100%);"></div>
<div style="position:absolute;left:29px;top:517px;width:790px;height:18px;background:#fff;"></div>
<div class="t" style="left:0;width:27.5px;text-align:right;top:519.0px;font-size:12px;line-height:16px;color:#111;">90</div>
<div class="t " style="left:49px;top:519.0px;font-size:12px;line-height:16px;font-weight:normal;color:#111;">F5</div>
<div class="cb" style="left:135px;top:520px;width:11px;height:11px;"></div>
<div class="t " style="left:324.79999999999995px;top:519.0px;font-size:12px;line-height:16px;font-weight:normal;color:#111;">.</div>
<div class="t " style="left:330px;top:519.0px;font-size:12px;line-height:16px;font-weight:normal;color:#111;letter-spacing:0.053px;">PCR-Kontr...</div>
<div class="t " style="left:405px;top:519.0px;font-size:12px;line-height:16px;font-weight:normal;color:#111;letter-spacing:0.160px;">45.0</div>
<div class="t " style="left:480px;top:519.0px;font-size:12px;line-height:16px;font-weight:normal;color:#111;letter-spacing:0.096px;">UNKNOWN</div>
<div class="t " style="left:555px;top:519.0px;font-size:12px;line-height:16px;font-weight:normal;color:#111;letter-spacing:-0.086px;">ROX-None</div>
<div style="position:absolute;left:0px;top:535px;width:29px;height:18px;background:linear-gradient(90deg,#a7b3cf 0%,#b3bed8 45%,#c7cfe2 100%);"></div>
<div style="position:absolute;left:29px;top:535px;width:790px;height:18px;background:#dbe1ee;"></div>
<div class="t" style="left:0;width:27.5px;text-align:right;top:537.0px;font-size:12px;line-height:16px;color:#111;">91</div>
<div class="t " style="left:49px;top:537.0px;font-size:12px;line-height:16px;font-weight:normal;color:#111;">F6</div>
<div class="cb" style="left:135px;top:538px;width:11px;height:11px;"></div>
<div class="t " style="left:324.79999999999995px;top:537.0px;font-size:12px;line-height:16px;font-weight:normal;color:#111;">.</div>
<div class="t " style="left:330px;top:537.0px;font-size:12px;line-height:16px;font-weight:normal;color:#111;letter-spacing:0.026px;">Mykoplasm...</div>
<div class="t " style="left:405px;top:537.0px;font-size:12px;line-height:16px;font-weight:normal;color:#111;letter-spacing:0.160px;">45.0</div>
<div class="t " style="left:480px;top:537.0px;font-size:12px;line-height:16px;font-weight:normal;color:#111;letter-spacing:0.096px;">UNKNOWN</div>
<div class="t " style="left:555px;top:537.0px;font-size:12px;line-height:16px;font-weight:normal;color:#111;letter-spacing:-0.045px;">FAM-None</div>
<div style="position:absolute;left:0px;top:553px;width:29px;height:18px;background:linear-gradient(90deg,#a7b3cf 0%,#b3bed8 45%,#c7cfe2 100%);"></div>
<div style="position:absolute;left:29px;top:553px;width:790px;height:18px;background:#fff;"></div>
<div class="t" style="left:0;width:27.5px;text-align:right;top:555.0px;font-size:12px;line-height:16px;color:#111;">92</div>
<div class="t " style="left:49px;top:555.0px;font-size:12px;line-height:16px;font-weight:normal;color:#111;">F6</div>
<div class="cb" style="left:135px;top:556px;width:11px;height:11px;"></div>
<div class="t " style="left:324.79999999999995px;top:555.0px;font-size:12px;line-height:16px;font-weight:normal;color:#111;">.</div>
<div class="t " style="left:330px;top:555.0px;font-size:12px;line-height:16px;font-weight:normal;color:#111;letter-spacing:0.053px;">PCR-Kontr...</div>
<div class="t " style="left:405px;top:555.0px;font-size:12px;line-height:16px;font-weight:normal;color:#111;letter-spacing:0.252px;">12.269048</div>
<div class="t " style="left:480px;top:555.0px;font-size:12px;line-height:16px;font-weight:normal;color:#111;letter-spacing:0.096px;">UNKNOWN</div>
<div class="t " style="left:555px;top:555.0px;font-size:12px;line-height:16px;font-weight:normal;color:#111;letter-spacing:-0.086px;">ROX-None</div>
<div style="position:absolute;left:0px;top:571px;width:29px;height:18px;background:linear-gradient(90deg,#a7b3cf 0%,#b3bed8 45%,#c7cfe2 100%);"></div>
<div style="position:absolute;left:29px;top:571px;width:790px;height:18px;background:#dbe1ee;"></div>
<div class="t" style="left:0;width:27.5px;text-align:right;top:573.0px;font-size:12px;line-height:16px;color:#111;">93</div>
<div class="t " style="left:49px;top:573.0px;font-size:12px;line-height:16px;font-weight:normal;color:#111;">F7</div>
<div class="cb" style="left:135px;top:574px;width:11px;height:11px;"></div>
<div class="t " style="left:324.79999999999995px;top:573.0px;font-size:12px;line-height:16px;font-weight:normal;color:#111;">.</div>
<div class="t " style="left:330px;top:573.0px;font-size:12px;line-height:16px;font-weight:normal;color:#111;letter-spacing:0.026px;">Mykoplasm...</div>
<div class="t " style="left:405px;top:573.0px;font-size:12px;line-height:16px;font-weight:normal;color:#111;letter-spacing:0.160px;">45.0</div>
<div class="t " style="left:480px;top:573.0px;font-size:12px;line-height:16px;font-weight:normal;color:#111;letter-spacing:0.096px;">UNKNOWN</div>
<div class="t " style="left:555px;top:573.0px;font-size:12px;line-height:16px;font-weight:normal;color:#111;letter-spacing:-0.045px;">FAM-None</div>
<div style="position:absolute;left:0px;top:589px;width:29px;height:18px;background:linear-gradient(90deg,#a7b3cf 0%,#b3bed8 45%,#c7cfe2 100%);"></div>
<div style="position:absolute;left:29px;top:589px;width:790px;height:18px;background:#fff;"></div>
<div class="t" style="left:0;width:27.5px;text-align:right;top:591.0px;font-size:12px;line-height:16px;color:#111;">94</div>
<div class="t " style="left:49px;top:591.0px;font-size:12px;line-height:16px;font-weight:normal;color:#111;">F7</div>
<div class="cb" style="left:135px;top:592px;width:11px;height:11px;"></div>
<div class="t " style="left:324.79999999999995px;top:591.0px;font-size:12px;line-height:16px;font-weight:normal;color:#111;">.</div>
<div class="t " style="left:330px;top:591.0px;font-size:12px;line-height:16px;font-weight:normal;color:#111;letter-spacing:0.053px;">PCR-Kontr...</div>
<div class="t " style="left:405px;top:591.0px;font-size:12px;line-height:16px;font-weight:normal;color:#111;letter-spacing:0.160px;">45.0</div>
<div class="t " style="left:480px;top:591.0px;font-size:12px;line-height:16px;font-weight:normal;color:#111;letter-spacing:0.096px;">UNKNOWN</div>
<div class="t " style="left:555px;top:591.0px;font-size:12px;line-height:16px;font-weight:normal;color:#111;letter-spacing:-0.086px;">ROX-None</div>
<div style="position:absolute;left:0px;top:607px;width:29px;height:18px;background:linear-gradient(90deg,#a7b3cf 0%,#b3bed8 45%,#c7cfe2 100%);"></div>
<div style="position:absolute;left:29px;top:607px;width:790px;height:18px;background:#dbe1ee;"></div>
<div class="t" style="left:0;width:27.5px;text-align:right;top:609.0px;font-size:12px;line-height:16px;color:#111;">95</div>
<div class="t " style="left:49px;top:609.0px;font-size:12px;line-height:16px;font-weight:normal;color:#111;">F8</div>
<div class="cb" style="left:135px;top:610px;width:11px;height:11px;"></div>
<div class="t " style="left:324.79999999999995px;top:609.0px;font-size:12px;line-height:16px;font-weight:normal;color:#111;">.</div>
<div class="t " style="left:330px;top:609.0px;font-size:12px;line-height:16px;font-weight:normal;color:#111;letter-spacing:0.026px;">Mykoplasm...</div>
<div class="t " style="left:405px;top:609.0px;font-size:12px;line-height:16px;font-weight:normal;color:#111;letter-spacing:0.160px;">45.0</div>
<div class="t " style="left:480px;top:609.0px;font-size:12px;line-height:16px;font-weight:normal;color:#111;letter-spacing:0.096px;">UNKNOWN</div>
<div class="t " style="left:555px;top:609.0px;font-size:12px;line-height:16px;font-weight:normal;color:#111;letter-spacing:-0.045px;">FAM-None</div>
<div style="position:absolute;left:0px;top:625px;width:29px;height:18px;background:linear-gradient(90deg,#a7b3cf 0%,#b3bed8 45%,#c7cfe2 100%);"></div>
<div style="position:absolute;left:29px;top:625px;width:790px;height:18px;background:#fff;"></div>
<div class="t" style="left:0;width:27.5px;text-align:right;top:627.0px;font-size:12px;line-height:16px;color:#111;">96</div>
<div class="t " style="left:49px;top:627.0px;font-size:12px;line-height:16px;font-weight:normal;color:#111;">F8</div>
<div class="cb" style="left:135px;top:628px;width:11px;height:11px;"></div>
<div class="t " style="left:324.79999999999995px;top:627.0px;font-size:12px;line-height:16px;font-weight:normal;color:#111;">.</div>
<div class="t " style="left:330px;top:627.0px;font-size:12px;line-height:16px;font-weight:normal;color:#111;letter-spacing:0.053px;">PCR-Kontr...</div>
<div class="t " style="left:405px;top:627.0px;font-size:12px;line-height:16px;font-weight:normal;color:#111;letter-spacing:0.351px;">13.366611</div>
<div class="t " style="left:480px;top:627.0px;font-size:12px;line-height:16px;font-weight:normal;color:#111;letter-spacing:0.096px;">UNKNOWN</div>
<div class="t " style="left:555px;top:627.0px;font-size:12px;line-height:16px;font-weight:normal;color:#111;letter-spacing:-0.086px;">ROX-None</div>
<svg style="left:208.29999999999995px;top:-3.5px" width="16" height="16" viewBox="0 0 16 16"><defs><linearGradient id="fg" x1="0" x2="1"><stop offset="0" stop-color="#f9cf3a"/><stop offset="1" stop-color="#f5bd10"/></linearGradient></defs><path d="M7.6 0 L15.2 15 H0 Z" fill="url(#fg)"/><text x="7" y="14.6" font-size="12" font-family="Liberation Sans" text-anchor="middle" fill="#1a1208">1</text></svg>
<svg style="left:208.29999999999995px;top:14.5px" width="16" height="16" viewBox="0 0 16 16"><defs><linearGradient id="fg" x1="0" x2="1"><stop offset="0" stop-color="#f9cf3a"/><stop offset="1" stop-color="#f5bd10"/></linearGradient></defs><path d="M7.6 0 L15.2 15 H0 Z" fill="url(#fg)"/><text x="7" y="14.6" font-size="12" font-family="Liberation Sans" text-anchor="middle" fill="#1a1208">1</text></svg>
<svg style="left:208.29999999999995px;top:356.5px" width="16" height="16" viewBox="0 0 16 16"><defs><linearGradient id="fg" x1="0" x2="1"><stop offset="0" stop-color="#f9cf3a"/><stop offset="1" stop-color="#f5bd10"/></linearGradient></defs><path d="M7.6 0 L15.2 15 H0 Z" fill="url(#fg)"/><text x="7" y="14.6" font-size="12" font-family="Liberation Sans" text-anchor="middle" fill="#1a1208">1</text></svg>
<svg style="left:208.29999999999995px;top:374.5px" width="16" height="16" viewBox="0 0 16 16"><defs><linearGradient id="fg" x1="0" x2="1"><stop offset="0" stop-color="#f9cf3a"/><stop offset="1" stop-color="#f5bd10"/></linearGradient></defs><path d="M7.6 0 L15.2 15 H0 Z" fill="url(#fg)"/><text x="7" y="14.6" font-size="12" font-family="Liberation Sans" text-anchor="middle" fill="#1a1208">1</text></svg>
<svg style="left:208.29999999999995px;top:428.5px" width="16" height="16" viewBox="0 0 16 16"><defs><linearGradient id="fg" x1="0" x2="1"><stop offset="0" stop-color="#f9cf3a"/><stop offset="1" stop-color="#f5bd10"/></linearGradient></defs><path d="M7.6 0 L15.2 15 H0 Z" fill="url(#fg)"/><text x="7" y="14.6" font-size="12" font-family="Liberation Sans" text-anchor="middle" fill="#1a1208">1</text></svg>
<div class="t " style="left:255px;top:140.5px;font-size:12px;line-height:16px;font-weight:normal;color:#333;">P-EN 19649</div>
<div style="position:absolute;left:214px;top:2px;width:106px;height:66px;background:#fff;"></div>
<div style="position:absolute;left:195px;top:145px;width:129px;height:211px;background:#fff;"></div>
<div style="position:absolute;left:193px;top:431px;width:133px;height:213px;background:#fff;"></div>
<div style="position:absolute;left:819px;top:0px;width:16px;height:643px;background:#f0f0f0;"></div>
<div style="position:absolute;left:826.5px;top:401px;width:2px;height:225px;background:#6e6e6e;border-radius:1px;"></div>
<div style="position:absolute;left:0px;top:643px;width:29px;height:18px;background:#fff;"></div>
<div style="position:absolute;left:29px;top:643px;width:790px;height:18px;background:#f0f0f0;"></div>
<div style="position:absolute;left:819px;top:643px;width:18px;height:18px;background:#fff;"></div>
<div style="position:absolute;left:46px;top:651px;width:530px;height:2px;background:#8c8c8c;border-radius:1px;"></div>
<div style="position:absolute;left:0px;top:0px;width:1px;height:643px;background:#7c96bf;"></div>
</div>
</body></html>
